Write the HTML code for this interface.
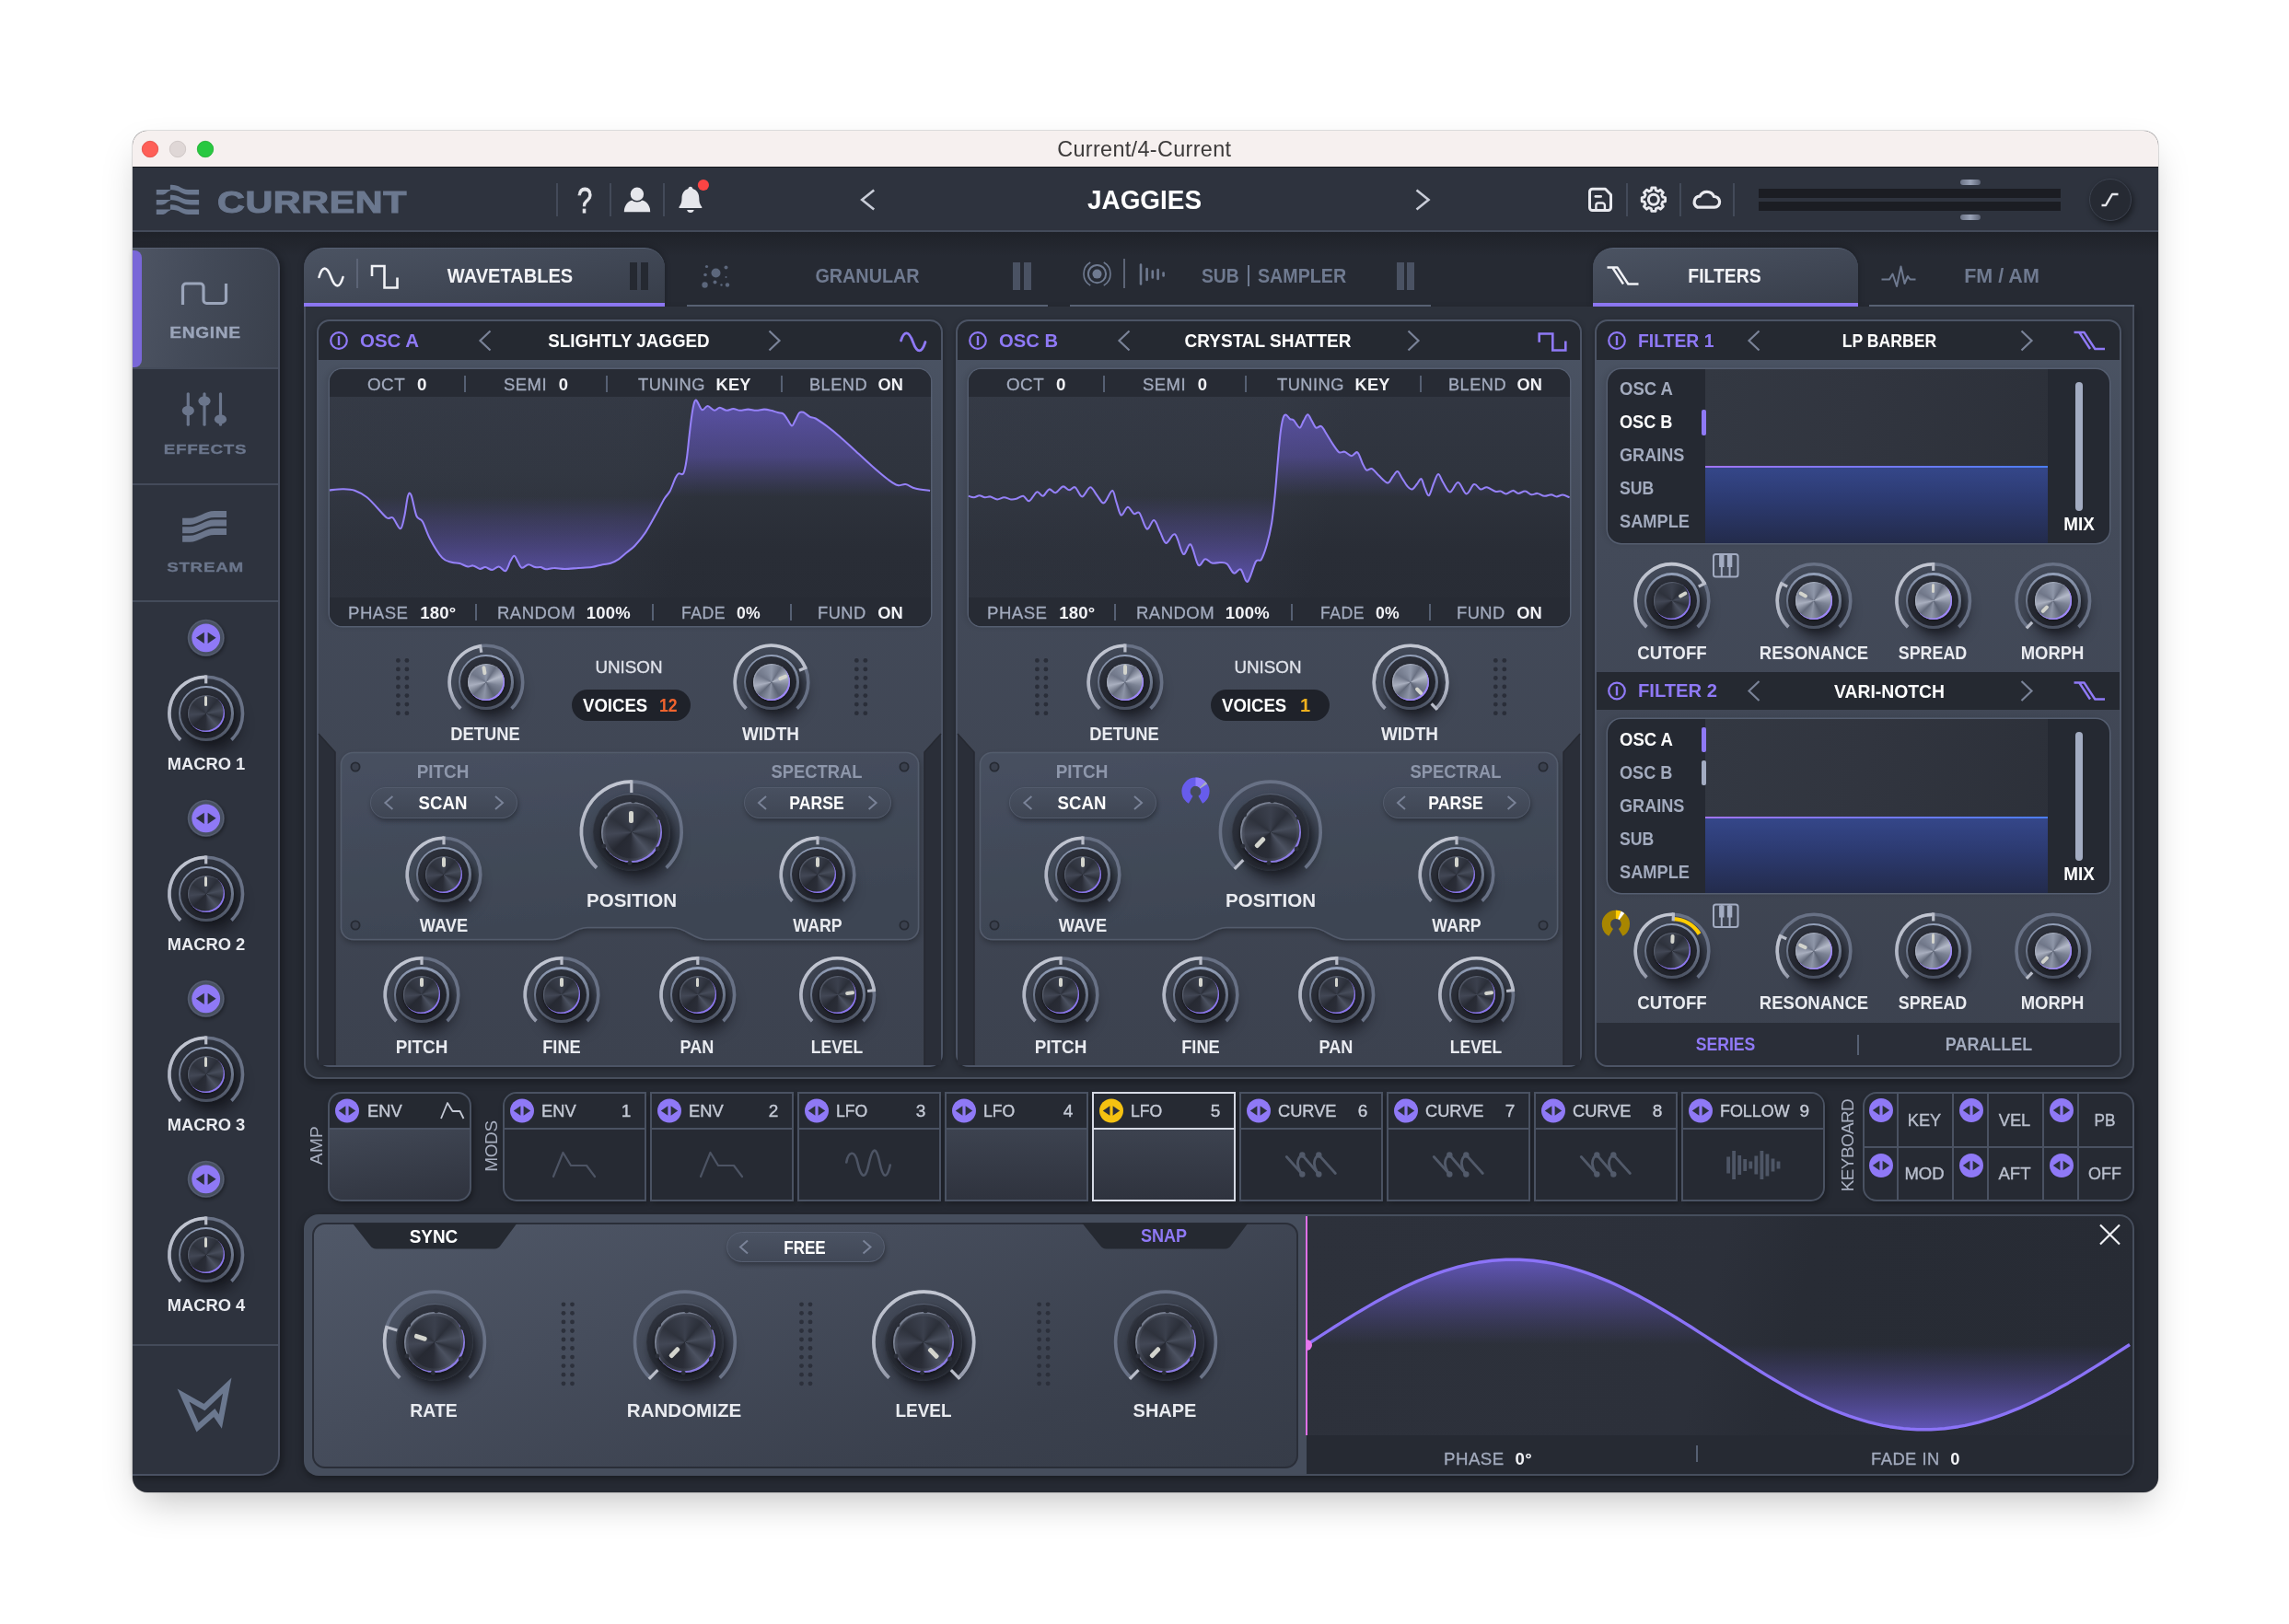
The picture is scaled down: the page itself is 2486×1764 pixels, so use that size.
<!DOCTYPE html>
<html><head><meta charset="utf-8"><title>Current/4-Current</title>
<style>
html,body{margin:0;padding:0;background:#fff;}
body{width:2486px;height:1764px;overflow:hidden;}
#root{will-change:transform;position:relative;width:2486px;height:1764px;overflow:hidden;font-family:"Liberation Sans",sans-serif;}
#root div{position:absolute;box-sizing:border-box;}
#ov{position:absolute;left:0;top:0;pointer-events:none;}
#top{left:0;top:0;width:0;height:0;}
.t{white-space:nowrap;line-height:1;}
.t b{font-weight:700;}
.kr{border-radius:50%;}
.kw{border-radius:50%;background:linear-gradient(150deg,#30343f 0%,#262932 45%,#1c1e25 100%);}
.kc{border-radius:50%;}
.kc i{position:absolute;left:50%;top:0;width:0;height:100%;display:block;}
.kc u{position:absolute;display:block;background:#d3d4cd;border-radius:2px;text-decoration:none;}
.kd{background:
  conic-gradient(from 0deg,#3b404d 0deg,#2b2f39 40deg,#474d5b 78deg,#2d313b 108deg,#4c5261 140deg,#2a2d37 185deg,#262932 225deg,#424755 265deg,#2e323c 305deg,#3b404d 360deg);
  box-shadow:inset -1.3px -1.5px 0.5px rgba(143,121,246,.95),inset 1px 1px 1px rgba(120,128,146,.5),0 1px 3px rgba(0,0,0,.6);}
.ks{background:
  conic-gradient(from 0deg,#8f97a9 0deg,#697082 32deg,#b3b9c8 68deg,#7b8294 105deg,#5c6374 150deg,#8d94a6 188deg,#646b7c 225deg,#a9afbf 258deg,#6f7688 300deg,#8f97a9 360deg);
  box-shadow:inset -1.4px -1.6px 0.5px rgba(160,135,255,.95),inset 1px 1px 1px rgba(190,196,210,.5),0 1px 3px rgba(0,0,0,.6);}
.kb{box-shadow:inset -1.6px -1.8px 0.6px rgba(143,121,246,.95),inset 1.6px 1.6px 1px rgba(150,158,176,.7),0 2px 4px rgba(0,0,0,.6);}
.kwb{background:linear-gradient(170deg,#30343f 0%,#292d37 45%,#22252d 100%);}
.kb::after{content:"";position:absolute;inset:0;border-radius:50%;background:radial-gradient(circle at 50% 50%,rgba(0,0,0,0) 0,rgba(0,0,0,0) 60%,rgba(140,148,168,.10) 62%,rgba(140,148,168,.16) 70%);}

</style></head>
<body>
<div id="root">
<div style="left:144.0px;top:142.0px;width:2200.0px;height:1478.5px;border-radius:16px;background:#262a33;box-shadow:0 0 0 0.5px rgba(0,0,0,.25),0 18px 42px -10px rgba(0,0,0,.25);overflow:hidden;"><div style="left:0;top:0;width:100%;height:39.5px;background:#f6f0ef;border-bottom:1px solid #15171c"></div><div style="left:0;top:39.5px;width:100%;height:70px;background:#2e333e;border-bottom:2px solid #434a59"></div><div style="left:0;top:109.5px;width:100%;height:26px;background:linear-gradient(180deg,#1f2229 0%,#262a33 100%)"></div></div>
<div class="t" style="left:1242.8px;top:151.00px;font-size:23.4px;color:#3c3a3a;font-weight:400;letter-spacing:0.35px;transform:translateX(-50%);">Current/4-Current</div>
<div class="t" style="left:235.6px;top:202.6px;font-size:33px;font-weight:700;color:#6b788f;letter-spacing:0.5px;-webkit-text-stroke:1.1px #6b788f;transform-origin:0 50%;transform:scaleX(1.25)">CURRENT</div>
<div style="left:604.0px;top:199.0px;width:2.0px;height:36.0px;background:#434a59"></div>
<div style="left:662.0px;top:199.0px;width:2.0px;height:36.0px;background:#434a59"></div>
<div style="left:720.0px;top:199.0px;width:2.0px;height:36.0px;background:#434a59"></div>
<div style="left:1766.0px;top:199.0px;width:2.0px;height:36.0px;background:#434a59"></div>
<div style="left:1824.0px;top:199.0px;width:2.0px;height:36.0px;background:#434a59"></div>
<div style="left:1882.0px;top:199.0px;width:2.0px;height:36.0px;background:#434a59"></div>
<div class="t" style="left:634.6px;top:198.00px;font-size:39px;color:#e6e7ec;font-weight:400;letter-spacing:0.00px;transform:translateX(-50%) scaleX(0.7608);-webkit-text-stroke:0.8px #e6e7ec;">?</div>
<div class="t" style="left:1243.0px;top:201.00px;font-size:30.4px;color:#ffffff;font-weight:700;letter-spacing:0.00px;transform:translateX(-50%) scaleX(0.9175);">JAGGIES</div>
<div style="left:1910.0px;top:205.0px;width:328.0px;height:10.0px;background:#1b1d23"></div>
<div style="left:1910.0px;top:219.0px;width:328.0px;height:10.0px;background:#1b1d23"></div>
<div style="left:2128.5px;top:195.0px;width:22.0px;height:6.0px;border-radius:3px;background:linear-gradient(90deg,#6b7386,#9aa3b7 50%,#5b6274)"></div>
<div style="left:2128.5px;top:233.0px;width:22.0px;height:6.0px;border-radius:3px;background:linear-gradient(90deg,#6b7386,#9aa3b7 50%,#5b6274)"></div>
<div style="left:2269.0px;top:193.6px;width:46.0px;height:46.0px;border-radius:50%;background:#262a33;border:1.5px solid #3d4350;box-shadow:2px 3px 6px rgba(0,0,0,.45)"></div>
<div style="left:144.0px;top:269.0px;width:160.0px;height:1334.0px;background:#2e333e;border-right:2px solid #4a5162;border-bottom:2px solid #4a5162;border-radius:0 22px 22px 0;box-shadow:3px 3px 8px rgba(0,0,0,.35)"></div>
<div style="left:144.0px;top:269.0px;width:158.0px;height:131.0px;border-radius:0 22px 0 0;background:linear-gradient(100deg,#4e5564 0%,#434a58 45%,#3a404c 100%);border-top:1px solid #586072"></div>
<div style="left:144.0px;top:271.5px;width:10.0px;height:127.0px;border-radius:0 8px 8px 0;background:#7967d8"></div>
<div style="left:144.0px;top:399.0px;width:158.0px;height:2.0px;background:#444b5a"></div>
<div style="left:144.0px;top:525.0px;width:158.0px;height:2.0px;background:#444b5a"></div>
<div style="left:144.0px;top:652.4px;width:158.0px;height:2.0px;background:#444b5a"></div>
<div style="left:144.0px;top:1459.5px;width:158.0px;height:2.0px;background:#444b5a"></div>
<div class="t" style="left:222.9px;top:354.00px;font-size:16px;font-weight:700;color:#9ba5ba;letter-spacing:0.55px;-webkit-text-stroke:0.3px #9ba5ba;transform:translateX(-50%) scaleX(1.2)">ENGINE</div>
<div class="t" style="left:222.9px;top:480.00px;font-size:15.2px;font-weight:700;color:#6b768c;letter-spacing:0.55px;-webkit-text-stroke:0.3px #6b768c;transform:translateX(-50%) scaleX(1.24)">EFFECTS</div>
<div class="t" style="left:222.6px;top:608.00px;font-size:15.2px;font-weight:700;color:#6b768c;letter-spacing:0.55px;-webkit-text-stroke:0.3px #6b768c;transform:translateX(-50%) scaleX(1.24)">STREAM</div>
<div class="kr" style="left:193.6px;top:744.9px;width:60.2px;height:60.2px;background:linear-gradient(180deg,#93a0b9 0%,#707a8e 45%,#495060 100%);box-shadow:7px 11px 14px rgba(12,13,18,.55),2px 3px 5px rgba(12,13,18,.35);"><div class="kw" style="inset:2.6px"></div></div>
<div class="kc kd" style="left:203.5px;top:754.8px;width:40.4px;height:40.4px"><i style="transform:rotate(0deg)"><u style="width:3.4px;height:10.5px;margin-left:-1.7px;top:1.6px"></u></i></div>
<div class="t" style="left:223.7px;top:820.00px;font-size:19px;color:#e9ebf0;font-weight:700;letter-spacing:0.00px;transform:translateX(-50%) scaleX(0.9645);">MACRO 1</div>
<div class="kr" style="left:193.6px;top:940.9px;width:60.2px;height:60.2px;background:linear-gradient(180deg,#93a0b9 0%,#707a8e 45%,#495060 100%);box-shadow:7px 11px 14px rgba(12,13,18,.55),2px 3px 5px rgba(12,13,18,.35);"><div class="kw" style="inset:2.6px"></div></div>
<div class="kc kd" style="left:203.5px;top:950.8px;width:40.4px;height:40.4px"><i style="transform:rotate(0deg)"><u style="width:3.4px;height:10.5px;margin-left:-1.7px;top:1.6px"></u></i></div>
<div class="t" style="left:223.7px;top:1016.00px;font-size:19px;color:#e9ebf0;font-weight:700;letter-spacing:0.00px;transform:translateX(-50%) scaleX(0.9645);">MACRO 2</div>
<div class="kr" style="left:193.6px;top:1136.9px;width:60.2px;height:60.2px;background:linear-gradient(180deg,#93a0b9 0%,#707a8e 45%,#495060 100%);box-shadow:7px 11px 14px rgba(12,13,18,.55),2px 3px 5px rgba(12,13,18,.35);"><div class="kw" style="inset:2.6px"></div></div>
<div class="kc kd" style="left:203.5px;top:1146.8px;width:40.4px;height:40.4px"><i style="transform:rotate(0deg)"><u style="width:3.4px;height:10.5px;margin-left:-1.7px;top:1.6px"></u></i></div>
<div class="t" style="left:223.7px;top:1212.00px;font-size:19px;color:#e9ebf0;font-weight:700;letter-spacing:0.00px;transform:translateX(-50%) scaleX(0.9645);">MACRO 3</div>
<div class="kr" style="left:193.6px;top:1332.9px;width:60.2px;height:60.2px;background:linear-gradient(180deg,#93a0b9 0%,#707a8e 45%,#495060 100%);box-shadow:7px 11px 14px rgba(12,13,18,.55),2px 3px 5px rgba(12,13,18,.35);"><div class="kw" style="inset:2.6px"></div></div>
<div class="kc kd" style="left:203.5px;top:1342.8px;width:40.4px;height:40.4px"><i style="transform:rotate(0deg)"><u style="width:3.4px;height:10.5px;margin-left:-1.7px;top:1.6px"></u></i></div>
<div class="t" style="left:223.7px;top:1408.00px;font-size:19px;color:#e9ebf0;font-weight:700;letter-spacing:0.00px;transform:translateX(-50%) scaleX(0.9645);">MACRO 4</div>
<div style="left:330.0px;top:269.0px;width:392.0px;height:64.0px;background:linear-gradient(170deg,#4b5362 0%,#414856 50%,#373d49 100%);border-radius:22px 22px 0 0;border-top:1px solid #566073;box-shadow:0 -1px 6px rgba(0,0,0,.25)"></div>
<div style="left:330.0px;top:329.0px;width:392.0px;height:4.0px;background:#8f79f6"></div>
<div style="left:1730.0px;top:269.0px;width:288.0px;height:64.0px;background:linear-gradient(170deg,#4b5362 0%,#414856 50%,#373d49 100%);border-radius:22px 22px 0 0;border-top:1px solid #566073;box-shadow:0 -1px 6px rgba(0,0,0,.25)"></div>
<div style="left:1730.0px;top:329.0px;width:288.0px;height:4.0px;background:#8f79f6"></div>
<div style="left:746.0px;top:330.6px;width:392.0px;height:2.3px;background:#5b6578"></div>
<div style="left:1162.0px;top:330.6px;width:392.0px;height:2.3px;background:#5b6578"></div>
<div style="left:2030.0px;top:330.6px;width:288.0px;height:2.3px;background:#5b6578"></div>
<div style="left:386.5px;top:281.0px;width:2.0px;height:32.0px;background:#5c6476"></div>
<div class="t" style="left:553.5px;top:289.00px;font-size:22px;color:#f1f2f6;font-weight:700;letter-spacing:0.00px;transform:translateX(-50%) scaleX(0.9116);">WAVETABLES</div>
<div style="left:684.0px;top:285.0px;width:8.0px;height:30.0px;background:#252931"></div>
<div style="left:696.0px;top:285.0px;width:8.0px;height:30.0px;background:#252931"></div>
<div class="t" style="left:941.6px;top:289.00px;font-size:22px;color:#6f7a90;font-weight:700;letter-spacing:0.00px;transform:translateX(-50%) scaleX(0.8993);">GRANULAR</div>
<div style="left:1100.4px;top:285.0px;width:8.0px;height:30.0px;background:#4a5263"></div>
<div style="left:1112.0px;top:285.0px;width:8.0px;height:30.0px;background:#4a5263"></div>
<div style="left:1220.0px;top:281.0px;width:2.0px;height:32.0px;background:#5c6476"></div>
<div class="t" style="left:1305.2px;top:289.00px;font-size:22px;color:#6f7a90;font-weight:700;letter-spacing:0.00px;transform-origin:0 50%;transform:scaleX(0.8762);">SUB</div>
<div style="left:1354.9px;top:287.6px;width:2.2px;height:23.6px;background:#6f7a90"></div>
<div class="t" style="left:1366.2px;top:289.00px;font-size:22px;color:#6f7a90;font-weight:700;letter-spacing:0.00px;transform-origin:0 50%;transform:scaleX(0.8934);">SAMPLER</div>
<div style="left:1516.5px;top:285.0px;width:8.0px;height:30.0px;background:#4a5263"></div>
<div style="left:1528.0px;top:285.0px;width:8.0px;height:30.0px;background:#4a5263"></div>
<div class="t" style="left:1873.4px;top:289.00px;font-size:22px;color:#f1f2f6;font-weight:700;letter-spacing:0.00px;transform:translateX(-50%) scaleX(0.8808);">FILTERS</div>
<div class="t" style="left:2173.8px;top:289.00px;font-size:22px;color:#6f7a90;font-weight:700;letter-spacing:0.00px;transform:translateX(-50%) scaleX(0.9773);">FM / AM</div>
<div style="left:330.0px;top:333.0px;width:1988.0px;height:839.0px;background:#2d323c;border:2px solid #474e5c;border-top:none;border-radius:0 0 16px 16px;box-shadow:0 4px 8px rgba(0,0,0,.3)"></div>
<div style="left:344.0px;top:347.0px;width:680.0px;height:812.0px;border-radius:14px;border:2px solid #4c5465;background:linear-gradient(180deg,#4b5464 0%,#434a59 30%,#3c424f 100%);overflow:hidden;box-shadow:0 2px 6px rgba(0,0,0,.3)"><div style="left:0;top:0;width:100%;height:42px;background:#252931"></div></div>
<div class="t" style="left:390.7px;top:359.00px;font-size:21px;color:#8f79f6;font-weight:700;letter-spacing:0.00px;transform-origin:0 50%;transform:scaleX(0.9737);">OSC A</div>
<div class="t" style="left:683.3px;top:361.00px;font-size:19.8px;color:#ffffff;font-weight:700;letter-spacing:0.00px;transform:translateX(-50%) scaleX(0.9495);">SLIGHTLY JAGGED</div>
<div style="left:357.5px;top:401.0px;width:653.0px;height:278.5px;border-radius:14px;background:linear-gradient(180deg,#323742 0%,#2f343e 40%,#292d36 70%,#282c35 100%);overflow:hidden;box-shadow:0 0 0 1.5px #555e70,-3px 0 6px rgba(0,0,0,.12)"><div style="left:0;top:0;width:100%;height:100%;background:linear-gradient(103deg,rgba(70,77,92,.16) 0%,rgba(70,77,92,.12) 48%,rgba(30,33,40,0) 60%)"></div><div style="left:0;top:0;width:100%;height:29.5px;background:#272b34"></div><div style="left:0;bottom:0;width:100%;height:31px;background:#272b34"></div></div>
<div class="t" style="left:398.5px;top:408.00px;font-size:19px;color:#a3abbe;font-weight:400;letter-spacing:0.5px;-webkit-text-stroke:0.3px #a3abbe;transform-origin:0 50%;transform:scaleX(0.9897)">OCT<b style="color:#f1f2f6;margin-left:13px;letter-spacing:0.2px;-webkit-text-stroke:0">0</b></div>
<div class="t" style="left:547.0px;top:408.00px;font-size:19px;color:#a3abbe;font-weight:400;letter-spacing:0.5px;-webkit-text-stroke:0.3px #a3abbe;transform-origin:0 50%;transform:scaleX(0.9720)">SEMI<b style="color:#f1f2f6;margin-left:13px;letter-spacing:0.2px;-webkit-text-stroke:0">0</b></div>
<div class="t" style="left:692.5px;top:408.00px;font-size:19px;color:#a3abbe;font-weight:400;letter-spacing:0.5px;-webkit-text-stroke:0.3px #a3abbe;transform-origin:0 50%;transform:scaleX(0.9623)">TUNING<b style="color:#f1f2f6;margin-left:12px;letter-spacing:0.2px;-webkit-text-stroke:0">KEY</b></div>
<div class="t" style="left:878.7px;top:408.00px;font-size:19px;color:#a3abbe;font-weight:400;letter-spacing:0.5px;-webkit-text-stroke:0.3px #a3abbe;transform-origin:0 50%;transform:scaleX(0.9563)">BLEND<b style="color:#f1f2f6;margin-left:12px;letter-spacing:0.2px;-webkit-text-stroke:0">ON</b></div>
<div style="left:504.0px;top:407.5px;width:2.0px;height:18.0px;background:#566073"></div>
<div style="left:658.0px;top:407.5px;width:2.0px;height:18.0px;background:#566073"></div>
<div style="left:848.0px;top:407.5px;width:2.0px;height:18.0px;background:#566073"></div>
<div class="t" style="left:377.8px;top:656.00px;font-size:19px;color:#a3abbe;font-weight:400;letter-spacing:0.5px;-webkit-text-stroke:0.3px #a3abbe;transform-origin:0 50%;transform:scaleX(0.9782)">PHASE<b style="color:#f1f2f6;margin-left:13px;letter-spacing:0.2px;-webkit-text-stroke:0">180°</b></div>
<div class="t" style="left:539.7px;top:656.00px;font-size:19px;color:#a3abbe;font-weight:400;letter-spacing:0.5px;-webkit-text-stroke:0.3px #a3abbe;transform-origin:0 50%;transform:scaleX(0.9728)">RANDOM<b style="color:#f1f2f6;margin-left:12px;letter-spacing:0.2px;-webkit-text-stroke:0">100%</b></div>
<div class="t" style="left:740.0px;top:656.00px;font-size:19px;color:#a3abbe;font-weight:400;letter-spacing:0.5px;-webkit-text-stroke:0.3px #a3abbe;transform-origin:0 50%;transform:scaleX(0.9275)">FADE<b style="color:#f1f2f6;margin-left:13px;letter-spacing:0.2px;-webkit-text-stroke:0">0%</b></div>
<div class="t" style="left:888.0px;top:656.00px;font-size:19px;color:#a3abbe;font-weight:400;letter-spacing:0.5px;-webkit-text-stroke:0.3px #a3abbe;transform-origin:0 50%;transform:scaleX(0.9620)">FUND<b style="color:#f1f2f6;margin-left:13px;letter-spacing:0.2px;-webkit-text-stroke:0">ON</b></div>
<div style="left:515.8px;top:655.5px;width:2.0px;height:18.0px;background:#566073"></div>
<div style="left:708.0px;top:655.5px;width:2.0px;height:18.0px;background:#566073"></div>
<div style="left:858.3px;top:655.5px;width:2.0px;height:18.0px;background:#566073"></div>
<div class="kr" style="left:497.8px;top:710.9px;width:60.2px;height:60.2px;background:linear-gradient(180deg,#93a0b9 0%,#707a8e 45%,#495060 100%);box-shadow:7px 11px 14px rgba(12,13,18,.55),2px 3px 5px rgba(12,13,18,.35);"><div class="kw" style="inset:2.6px"></div></div>
<div class="kc ks" style="left:507.7px;top:720.8px;width:40.4px;height:40.4px"><i style="transform:rotate(-9deg)"><u style="width:3.4px;height:10.5px;margin-left:-1.7px;top:1.6px"></u></i></div>
<div class="kr" style="left:807.9px;top:710.9px;width:60.2px;height:60.2px;background:linear-gradient(180deg,#93a0b9 0%,#707a8e 45%,#495060 100%);box-shadow:7px 11px 14px rgba(12,13,18,.55),2px 3px 5px rgba(12,13,18,.35);"><div class="kw" style="inset:2.6px"></div></div>
<div class="kc ks" style="left:817.8px;top:720.8px;width:40.4px;height:40.4px"><i style="transform:rotate(67deg)"><u style="width:3.4px;height:10.5px;margin-left:-1.7px;top:1.6px"></u></i></div>
<div class="t" style="left:527.3px;top:787.00px;font-size:20px;color:#e9ebf0;font-weight:700;letter-spacing:0.00px;transform:translateX(-50%) scaleX(0.9170);">DETUNE</div>
<div class="t" style="left:837.4px;top:787.00px;font-size:20px;color:#e9ebf0;font-weight:700;letter-spacing:0.00px;transform:translateX(-50%) scaleX(0.9475);">WIDTH</div>
<div class="t" style="left:683.2px;top:715.00px;font-size:19px;color:#dfe2ea;font-weight:400;letter-spacing:0.00px;transform:translateX(-50%) scaleX(0.9906);-webkit-text-stroke:0.35px #dfe2ea;">UNISON</div>
<div style="left:620.5px;top:749.3px;width:129.5px;height:33.5px;border-radius:17px;background:#1f222a"></div>
<div class="t" style="left:633.0px;top:756.00px;font-size:20px;color:#ffffff;font-weight:700;letter-spacing:0.00px;transform-origin:0 50%;transform:scaleX(0.9288);">VOICES</div>
<div class="t" style="left:715.9px;top:756.00px;font-size:20px;color:#f0632e;font-weight:700;letter-spacing:0.00px;transform-origin:0 50%;transform:scaleX(0.8811);">12</div>
<svg style="position:absolute;left:0;top:0" width="2486" height="1764" viewBox="0 0 2486 1764"><path d="M383.5,817.5 H984.5 A13,13 0 0 1 997.5,830.5 V1007.5 A13,13 0 0 1 984.5,1020.5 H768 C752,1020.5 746,1007.5 730,1007.5 H638 C622,1007.5 616,1020.5 600,1020.5 H383.5 A13,13 0 0 1 370.5,1007.5 V830.5 A13,13 0 0 1 383.5,817.5 Z" fill="url(#modp)" stroke="#535b6c" stroke-width="1.600" filter="url(#sh3)"/><circle cx="386" cy="833" r="4.600" fill="#3a404d" stroke="#262a33" stroke-width="1.800"/><circle cx="386" cy="1005" r="4.600" fill="#3a404d" stroke="#262a33" stroke-width="1.800"/><circle cx="982" cy="833" r="4.600" fill="#3a404d" stroke="#262a33" stroke-width="1.800"/><circle cx="982" cy="1005" r="4.600" fill="#3a404d" stroke="#262a33" stroke-width="1.800"/></svg>
<div class="t" style="left:481.4px;top:829.00px;font-size:19.5px;color:#8e97ab;font-weight:700;letter-spacing:0.00px;transform:translateX(-50%) scaleX(0.9692);">PITCH</div>
<div class="t" style="left:887.4px;top:829.00px;font-size:19.5px;color:#8e97ab;font-weight:700;letter-spacing:0.00px;transform:translateX(-50%) scaleX(0.9411);">SPECTRAL</div>
<div style="left:402.4px;top:855.4px;width:159.6px;height:33.2px;border-radius:17px;background:linear-gradient(180deg,#485060,#3f4654);border:1px solid #535b6c;box-shadow:1px 3px 5px rgba(0,0,0,.3)"></div>
<div class="t" style="left:481.4px;top:862.00px;font-size:20px;color:#ffffff;font-weight:700;letter-spacing:0.00px;transform:translateX(-50%) scaleX(0.9317);">SCAN</div>
<div style="left:808.0px;top:855.4px;width:159.6px;height:33.2px;border-radius:17px;background:linear-gradient(180deg,#485060,#3f4654);border:1px solid #535b6c;box-shadow:1px 3px 5px rgba(0,0,0,.3)"></div>
<div class="t" style="left:887.0px;top:862.00px;font-size:20px;color:#ffffff;font-weight:700;letter-spacing:0.00px;transform:translateX(-50%) scaleX(0.8810);">PARSE</div>
<div class="kr" style="left:451.9px;top:919.9px;width:60.2px;height:60.2px;background:linear-gradient(180deg,#93a0b9 0%,#707a8e 45%,#495060 100%);box-shadow:7px 11px 14px rgba(12,13,18,.55),2px 3px 5px rgba(12,13,18,.35);"><div class="kw" style="inset:2.6px"></div></div>
<div class="kc kd" style="left:461.8px;top:929.8px;width:40.4px;height:40.4px"><i style="transform:rotate(0deg)"><u style="width:3.4px;height:10.5px;margin-left:-1.7px;top:1.6px"></u></i></div>
<div class="kr" style="left:857.9px;top:919.9px;width:60.2px;height:60.2px;background:linear-gradient(180deg,#93a0b9 0%,#707a8e 45%,#495060 100%);box-shadow:7px 11px 14px rgba(12,13,18,.55),2px 3px 5px rgba(12,13,18,.35);"><div class="kw" style="inset:2.6px"></div></div>
<div class="kc kd" style="left:867.8px;top:929.8px;width:40.4px;height:40.4px"><i style="transform:rotate(0deg)"><u style="width:3.4px;height:10.5px;margin-left:-1.7px;top:1.6px"></u></i></div>
<div class="kr" style="left:643.8px;top:861.5px;width:84.0px;height:84.0px;background:linear-gradient(180deg,#596173 0%,#333843 18%,#272b34 100%);box-shadow:7px 11px 14px rgba(12,13,18,.55),2px 3px 5px rgba(12,13,18,.35);"><div class="kw kwb" style="inset:1.5px"></div></div>
<div class="kc kd kb" style="left:652.8px;top:870.5px;width:66.0px;height:66.0px"><i style="transform:rotate(0deg)"><u style="width:5px;height:13.5px;margin-left:-2.5px;top:10.3px"></u></i></div>
<div class="t" style="left:685.6px;top:967.00px;font-size:21px;color:#e9ebf0;font-weight:700;letter-spacing:0.00px;transform:translateX(-50%) scaleX(0.9766);">POSITION</div>
<div class="t" style="left:481.7px;top:995.00px;font-size:20px;color:#e9ebf0;font-weight:700;letter-spacing:0.00px;transform:translateX(-50%) scaleX(0.9126);">WAVE</div>
<div class="t" style="left:887.6px;top:995.00px;font-size:20px;color:#e9ebf0;font-weight:700;letter-spacing:0.00px;transform:translateX(-50%) scaleX(0.8883);">WARP</div>
<div class="kr" style="left:427.9px;top:1050.4px;width:60.2px;height:60.2px;background:linear-gradient(180deg,#93a0b9 0%,#707a8e 45%,#495060 100%);box-shadow:7px 11px 14px rgba(12,13,18,.55),2px 3px 5px rgba(12,13,18,.35);"><div class="kw" style="inset:2.6px"></div></div>
<div class="kc kd" style="left:437.8px;top:1060.3px;width:40.4px;height:40.4px"><i style="transform:rotate(0deg)"><u style="width:3.4px;height:10.5px;margin-left:-1.7px;top:1.6px"></u></i></div>
<div class="t" style="left:457.6px;top:1127.00px;font-size:20px;color:#e9ebf0;font-weight:700;letter-spacing:0.00px;transform:translateX(-50%) scaleX(0.9450);">PITCH</div>
<div class="kr" style="left:579.9px;top:1050.4px;width:60.2px;height:60.2px;background:linear-gradient(180deg,#93a0b9 0%,#707a8e 45%,#495060 100%);box-shadow:7px 11px 14px rgba(12,13,18,.55),2px 3px 5px rgba(12,13,18,.35);"><div class="kw" style="inset:2.6px"></div></div>
<div class="kc kd" style="left:589.8px;top:1060.3px;width:40.4px;height:40.4px"><i style="transform:rotate(0deg)"><u style="width:3.4px;height:10.5px;margin-left:-1.7px;top:1.6px"></u></i></div>
<div class="t" style="left:609.6px;top:1127.00px;font-size:20px;color:#e9ebf0;font-weight:700;letter-spacing:0.00px;transform:translateX(-50%) scaleX(0.9132);">FINE</div>
<div class="kr" style="left:727.7px;top:1050.4px;width:60.2px;height:60.2px;background:linear-gradient(180deg,#93a0b9 0%,#707a8e 45%,#495060 100%);box-shadow:7px 11px 14px rgba(12,13,18,.55),2px 3px 5px rgba(12,13,18,.35);"><div class="kw" style="inset:2.6px"></div></div>
<div class="kc kd" style="left:737.6px;top:1060.3px;width:40.4px;height:40.4px"><i style="transform:rotate(0deg)"><u style="width:3.4px;height:10.5px;margin-left:-1.7px;top:1.6px"></u></i></div>
<div class="t" style="left:757.4px;top:1127.00px;font-size:20px;color:#e9ebf0;font-weight:700;letter-spacing:0.00px;transform:translateX(-50%) scaleX(0.9032);">PAN</div>
<div class="kr" style="left:879.6px;top:1050.4px;width:60.2px;height:60.2px;background:linear-gradient(180deg,#93a0b9 0%,#707a8e 45%,#495060 100%);box-shadow:7px 11px 14px rgba(12,13,18,.55),2px 3px 5px rgba(12,13,18,.35);"><div class="kw" style="inset:2.6px"></div></div>
<div class="kc kd" style="left:889.5px;top:1060.3px;width:40.4px;height:40.4px"><i style="transform:rotate(83deg)"><u style="width:3.4px;height:10.5px;margin-left:-1.7px;top:1.6px"></u></i></div>
<div class="t" style="left:909.3px;top:1127.00px;font-size:20px;color:#e9ebf0;font-weight:700;letter-spacing:0.00px;transform:translateX(-50%) scaleX(0.8751);">LEVEL</div>
<div style="left:1038.0px;top:347.0px;width:680.0px;height:812.0px;border-radius:14px;border:2px solid #4c5465;background:linear-gradient(180deg,#4b5464 0%,#434a59 30%,#3c424f 100%);overflow:hidden;box-shadow:0 2px 6px rgba(0,0,0,.3)"><div style="left:0;top:0;width:100%;height:42px;background:#252931"></div></div>
<div class="t" style="left:1084.7px;top:359.00px;font-size:21px;color:#8f79f6;font-weight:700;letter-spacing:0.00px;transform-origin:0 50%;transform:scaleX(0.9623);">OSC B</div>
<div class="t" style="left:1377.3px;top:361.00px;font-size:19.8px;color:#ffffff;font-weight:700;letter-spacing:0.00px;transform:translateX(-50%) scaleX(0.9604);">CRYSTAL SHATTER</div>
<div style="left:1051.5px;top:401.0px;width:653.0px;height:278.5px;border-radius:14px;background:linear-gradient(180deg,#323742 0%,#2f343e 40%,#292d36 70%,#282c35 100%);overflow:hidden;box-shadow:0 0 0 1.5px #555e70,-3px 0 6px rgba(0,0,0,.12)"><div style="left:0;top:0;width:100%;height:100%;background:linear-gradient(103deg,rgba(70,77,92,.16) 0%,rgba(70,77,92,.12) 48%,rgba(30,33,40,0) 60%)"></div><div style="left:0;top:0;width:100%;height:29.5px;background:#272b34"></div><div style="left:0;bottom:0;width:100%;height:31px;background:#272b34"></div></div>
<div class="t" style="left:1092.5px;top:408.00px;font-size:19px;color:#a3abbe;font-weight:400;letter-spacing:0.5px;-webkit-text-stroke:0.3px #a3abbe;transform-origin:0 50%;transform:scaleX(0.9897)">OCT<b style="color:#f1f2f6;margin-left:13px;letter-spacing:0.2px;-webkit-text-stroke:0">0</b></div>
<div class="t" style="left:1241.0px;top:408.00px;font-size:19px;color:#a3abbe;font-weight:400;letter-spacing:0.5px;-webkit-text-stroke:0.3px #a3abbe;transform-origin:0 50%;transform:scaleX(0.9720)">SEMI<b style="color:#f1f2f6;margin-left:13px;letter-spacing:0.2px;-webkit-text-stroke:0">0</b></div>
<div class="t" style="left:1386.5px;top:408.00px;font-size:19px;color:#a3abbe;font-weight:400;letter-spacing:0.5px;-webkit-text-stroke:0.3px #a3abbe;transform-origin:0 50%;transform:scaleX(0.9623)">TUNING<b style="color:#f1f2f6;margin-left:12px;letter-spacing:0.2px;-webkit-text-stroke:0">KEY</b></div>
<div class="t" style="left:1572.7px;top:408.00px;font-size:19px;color:#a3abbe;font-weight:400;letter-spacing:0.5px;-webkit-text-stroke:0.3px #a3abbe;transform-origin:0 50%;transform:scaleX(0.9563)">BLEND<b style="color:#f1f2f6;margin-left:12px;letter-spacing:0.2px;-webkit-text-stroke:0">ON</b></div>
<div style="left:1198.0px;top:407.5px;width:2.0px;height:18.0px;background:#566073"></div>
<div style="left:1352.0px;top:407.5px;width:2.0px;height:18.0px;background:#566073"></div>
<div style="left:1542.0px;top:407.5px;width:2.0px;height:18.0px;background:#566073"></div>
<div class="t" style="left:1071.8px;top:656.00px;font-size:19px;color:#a3abbe;font-weight:400;letter-spacing:0.5px;-webkit-text-stroke:0.3px #a3abbe;transform-origin:0 50%;transform:scaleX(0.9782)">PHASE<b style="color:#f1f2f6;margin-left:13px;letter-spacing:0.2px;-webkit-text-stroke:0">180°</b></div>
<div class="t" style="left:1233.7px;top:656.00px;font-size:19px;color:#a3abbe;font-weight:400;letter-spacing:0.5px;-webkit-text-stroke:0.3px #a3abbe;transform-origin:0 50%;transform:scaleX(0.9728)">RANDOM<b style="color:#f1f2f6;margin-left:12px;letter-spacing:0.2px;-webkit-text-stroke:0">100%</b></div>
<div class="t" style="left:1434.0px;top:656.00px;font-size:19px;color:#a3abbe;font-weight:400;letter-spacing:0.5px;-webkit-text-stroke:0.3px #a3abbe;transform-origin:0 50%;transform:scaleX(0.9275)">FADE<b style="color:#f1f2f6;margin-left:13px;letter-spacing:0.2px;-webkit-text-stroke:0">0%</b></div>
<div class="t" style="left:1582.0px;top:656.00px;font-size:19px;color:#a3abbe;font-weight:400;letter-spacing:0.5px;-webkit-text-stroke:0.3px #a3abbe;transform-origin:0 50%;transform:scaleX(0.9620)">FUND<b style="color:#f1f2f6;margin-left:13px;letter-spacing:0.2px;-webkit-text-stroke:0">ON</b></div>
<div style="left:1209.8px;top:655.5px;width:2.0px;height:18.0px;background:#566073"></div>
<div style="left:1402.0px;top:655.5px;width:2.0px;height:18.0px;background:#566073"></div>
<div style="left:1552.3px;top:655.5px;width:2.0px;height:18.0px;background:#566073"></div>
<div class="kr" style="left:1191.8px;top:710.9px;width:60.2px;height:60.2px;background:linear-gradient(180deg,#93a0b9 0%,#707a8e 45%,#495060 100%);box-shadow:7px 11px 14px rgba(12,13,18,.55),2px 3px 5px rgba(12,13,18,.35);"><div class="kw" style="inset:2.6px"></div></div>
<div class="kc ks" style="left:1201.7px;top:720.8px;width:40.4px;height:40.4px"><i style="transform:rotate(0deg)"><u style="width:3.4px;height:10.5px;margin-left:-1.7px;top:1.6px"></u></i></div>
<div class="kr" style="left:1501.9px;top:710.9px;width:60.2px;height:60.2px;background:linear-gradient(180deg,#93a0b9 0%,#707a8e 45%,#495060 100%);box-shadow:7px 11px 14px rgba(12,13,18,.55),2px 3px 5px rgba(12,13,18,.35);"><div class="kw" style="inset:2.6px"></div></div>
<div class="kc ks" style="left:1511.8px;top:720.8px;width:40.4px;height:40.4px"><i style="transform:rotate(136deg)"><u style="width:3.4px;height:10.5px;margin-left:-1.7px;top:1.6px"></u></i></div>
<div class="t" style="left:1221.3px;top:787.00px;font-size:20px;color:#e9ebf0;font-weight:700;letter-spacing:0.00px;transform:translateX(-50%) scaleX(0.9170);">DETUNE</div>
<div class="t" style="left:1531.4px;top:787.00px;font-size:20px;color:#e9ebf0;font-weight:700;letter-spacing:0.00px;transform:translateX(-50%) scaleX(0.9475);">WIDTH</div>
<div class="t" style="left:1377.2px;top:715.00px;font-size:19px;color:#dfe2ea;font-weight:400;letter-spacing:0.00px;transform:translateX(-50%) scaleX(0.9906);-webkit-text-stroke:0.35px #dfe2ea;">UNISON</div>
<div style="left:1314.5px;top:749.3px;width:129.5px;height:33.5px;border-radius:17px;background:#1f222a"></div>
<div class="t" style="left:1327.0px;top:756.00px;font-size:20px;color:#ffffff;font-weight:700;letter-spacing:0.00px;transform-origin:0 50%;transform:scaleX(0.9288);">VOICES</div>
<div class="t" style="left:1412.0px;top:756.00px;font-size:20px;color:#f0b11e;font-weight:700;letter-spacing:0.00px;">1</div>
<svg style="position:absolute;left:0;top:0" width="2486" height="1764" viewBox="0 0 2486 1764"><path d="M1077.5,817.5 H1678.5 A13,13 0 0 1 1691.5,830.5 V1007.5 A13,13 0 0 1 1678.5,1020.5 H1462 C1446,1020.5 1440,1007.5 1424,1007.5 H1332 C1316,1007.5 1310,1020.5 1294,1020.5 H1077.5 A13,13 0 0 1 1064.5,1007.5 V830.5 A13,13 0 0 1 1077.5,817.5 Z" fill="url(#modp)" stroke="#535b6c" stroke-width="1.600" filter="url(#sh3)"/><circle cx="1080" cy="833" r="4.600" fill="#3a404d" stroke="#262a33" stroke-width="1.800"/><circle cx="1080" cy="1005" r="4.600" fill="#3a404d" stroke="#262a33" stroke-width="1.800"/><circle cx="1676" cy="833" r="4.600" fill="#3a404d" stroke="#262a33" stroke-width="1.800"/><circle cx="1676" cy="1005" r="4.600" fill="#3a404d" stroke="#262a33" stroke-width="1.800"/></svg>
<div class="t" style="left:1175.4px;top:829.00px;font-size:19.5px;color:#8e97ab;font-weight:700;letter-spacing:0.00px;transform:translateX(-50%) scaleX(0.9692);">PITCH</div>
<div class="t" style="left:1581.4px;top:829.00px;font-size:19.5px;color:#8e97ab;font-weight:700;letter-spacing:0.00px;transform:translateX(-50%) scaleX(0.9411);">SPECTRAL</div>
<div style="left:1096.4px;top:855.4px;width:159.6px;height:33.2px;border-radius:17px;background:linear-gradient(180deg,#485060,#3f4654);border:1px solid #535b6c;box-shadow:1px 3px 5px rgba(0,0,0,.3)"></div>
<div class="t" style="left:1175.4px;top:862.00px;font-size:20px;color:#ffffff;font-weight:700;letter-spacing:0.00px;transform:translateX(-50%) scaleX(0.9317);">SCAN</div>
<div style="left:1502.0px;top:855.4px;width:159.6px;height:33.2px;border-radius:17px;background:linear-gradient(180deg,#485060,#3f4654);border:1px solid #535b6c;box-shadow:1px 3px 5px rgba(0,0,0,.3)"></div>
<div class="t" style="left:1581.0px;top:862.00px;font-size:20px;color:#ffffff;font-weight:700;letter-spacing:0.00px;transform:translateX(-50%) scaleX(0.8810);">PARSE</div>
<div class="kr" style="left:1145.9px;top:919.9px;width:60.2px;height:60.2px;background:linear-gradient(180deg,#93a0b9 0%,#707a8e 45%,#495060 100%);box-shadow:7px 11px 14px rgba(12,13,18,.55),2px 3px 5px rgba(12,13,18,.35);"><div class="kw" style="inset:2.6px"></div></div>
<div class="kc kd" style="left:1155.8px;top:929.8px;width:40.4px;height:40.4px"><i style="transform:rotate(0deg)"><u style="width:3.4px;height:10.5px;margin-left:-1.7px;top:1.6px"></u></i></div>
<div class="kr" style="left:1551.9px;top:919.9px;width:60.2px;height:60.2px;background:linear-gradient(180deg,#93a0b9 0%,#707a8e 45%,#495060 100%);box-shadow:7px 11px 14px rgba(12,13,18,.55),2px 3px 5px rgba(12,13,18,.35);"><div class="kw" style="inset:2.6px"></div></div>
<div class="kc kd" style="left:1561.8px;top:929.8px;width:40.4px;height:40.4px"><i style="transform:rotate(0deg)"><u style="width:3.4px;height:10.5px;margin-left:-1.7px;top:1.6px"></u></i></div>
<div class="kr" style="left:1337.8px;top:861.5px;width:84.0px;height:84.0px;background:linear-gradient(180deg,#596173 0%,#333843 18%,#272b34 100%);box-shadow:7px 11px 14px rgba(12,13,18,.55),2px 3px 5px rgba(12,13,18,.35);"><div class="kw kwb" style="inset:1.5px"></div></div>
<div class="kc kd kb" style="left:1346.8px;top:870.5px;width:66.0px;height:66.0px"><i style="transform:rotate(-136deg)"><u style="width:5px;height:13.5px;margin-left:-2.5px;top:10.3px"></u></i></div>
<div class="t" style="left:1379.6px;top:967.00px;font-size:21px;color:#e9ebf0;font-weight:700;letter-spacing:0.00px;transform:translateX(-50%) scaleX(0.9766);">POSITION</div>
<div class="t" style="left:1175.7px;top:995.00px;font-size:20px;color:#e9ebf0;font-weight:700;letter-spacing:0.00px;transform:translateX(-50%) scaleX(0.9126);">WAVE</div>
<div class="t" style="left:1581.6px;top:995.00px;font-size:20px;color:#e9ebf0;font-weight:700;letter-spacing:0.00px;transform:translateX(-50%) scaleX(0.8883);">WARP</div>
<div class="kr" style="left:1121.9px;top:1050.4px;width:60.2px;height:60.2px;background:linear-gradient(180deg,#93a0b9 0%,#707a8e 45%,#495060 100%);box-shadow:7px 11px 14px rgba(12,13,18,.55),2px 3px 5px rgba(12,13,18,.35);"><div class="kw" style="inset:2.6px"></div></div>
<div class="kc kd" style="left:1131.8px;top:1060.3px;width:40.4px;height:40.4px"><i style="transform:rotate(0deg)"><u style="width:3.4px;height:10.5px;margin-left:-1.7px;top:1.6px"></u></i></div>
<div class="t" style="left:1151.6px;top:1127.00px;font-size:20px;color:#e9ebf0;font-weight:700;letter-spacing:0.00px;transform:translateX(-50%) scaleX(0.9450);">PITCH</div>
<div class="kr" style="left:1273.9px;top:1050.4px;width:60.2px;height:60.2px;background:linear-gradient(180deg,#93a0b9 0%,#707a8e 45%,#495060 100%);box-shadow:7px 11px 14px rgba(12,13,18,.55),2px 3px 5px rgba(12,13,18,.35);"><div class="kw" style="inset:2.6px"></div></div>
<div class="kc kd" style="left:1283.8px;top:1060.3px;width:40.4px;height:40.4px"><i style="transform:rotate(0deg)"><u style="width:3.4px;height:10.5px;margin-left:-1.7px;top:1.6px"></u></i></div>
<div class="t" style="left:1303.6px;top:1127.00px;font-size:20px;color:#e9ebf0;font-weight:700;letter-spacing:0.00px;transform:translateX(-50%) scaleX(0.9132);">FINE</div>
<div class="kr" style="left:1421.7px;top:1050.4px;width:60.2px;height:60.2px;background:linear-gradient(180deg,#93a0b9 0%,#707a8e 45%,#495060 100%);box-shadow:7px 11px 14px rgba(12,13,18,.55),2px 3px 5px rgba(12,13,18,.35);"><div class="kw" style="inset:2.6px"></div></div>
<div class="kc kd" style="left:1431.6px;top:1060.3px;width:40.4px;height:40.4px"><i style="transform:rotate(0deg)"><u style="width:3.4px;height:10.5px;margin-left:-1.7px;top:1.6px"></u></i></div>
<div class="t" style="left:1451.4px;top:1127.00px;font-size:20px;color:#e9ebf0;font-weight:700;letter-spacing:0.00px;transform:translateX(-50%) scaleX(0.9032);">PAN</div>
<div class="kr" style="left:1573.6px;top:1050.4px;width:60.2px;height:60.2px;background:linear-gradient(180deg,#93a0b9 0%,#707a8e 45%,#495060 100%);box-shadow:7px 11px 14px rgba(12,13,18,.55),2px 3px 5px rgba(12,13,18,.35);"><div class="kw" style="inset:2.6px"></div></div>
<div class="kc kd" style="left:1583.5px;top:1060.3px;width:40.4px;height:40.4px"><i style="transform:rotate(83deg)"><u style="width:3.4px;height:10.5px;margin-left:-1.7px;top:1.6px"></u></i></div>
<div class="t" style="left:1603.3px;top:1127.00px;font-size:20px;color:#e9ebf0;font-weight:700;letter-spacing:0.00px;transform:translateX(-50%) scaleX(0.8751);">LEVEL</div>
<div style="left:1732.0px;top:347.0px;width:572.0px;height:812.0px;border-radius:14px;border:2px solid #4c5465;background:linear-gradient(180deg,#4b5464 0%,#434a59 30%,#3c424f 100%);overflow:hidden;box-shadow:0 2px 6px rgba(0,0,0,.3)"><div style="left:0;top:0;width:100%;height:42px;background:#252931"></div><div style="left:0;top:380.500px;width:100%;height:41.500px;background:#252931"></div><div style="left:0;top:762px;width:100%;height:50px;background:#2a2e38"></div></div>
<div class="t" style="left:1778.6px;top:359.00px;font-size:21px;color:#8f79f6;font-weight:700;letter-spacing:0.00px;transform-origin:0 50%;transform:scaleX(0.9213);">FILTER 1</div>
<div class="t" style="left:2052.4px;top:361.00px;font-size:19.8px;color:#ffffff;font-weight:700;letter-spacing:0.00px;transform:translateX(-50%) scaleX(0.8919);">LP BARBER</div>
<div style="left:1745.5px;top:400.6px;width:545.5px;height:189.2px;border-radius:15px;background:#252932;overflow:hidden;box-shadow:0 0 0 1.500px #555e70,-3px 0 6px rgba(0,0,0,.12)"><div style="left:106.500px;top:0;width:372px;height:100%;background:linear-gradient(100deg,#333842 0%,#31353f 45%,#2c3039 100%)"></div><div style="left:106.500px;top:106.500px;width:372px;height:83px;background:linear-gradient(180deg,#35478a 0%,#2c3a70 45%,#232b4b 100%)"></div><div style="left:106.500px;top:105.500px;width:372px;height:2.200px;background:linear-gradient(90deg,#a174f5,#4b7df2)"></div><div style="left:508.500px;top:14px;width:8px;height:140px;border-radius:4px;background:#a3acc2"></div></div>
<div class="t" style="left:1758.6px;top:413.00px;font-size:19.3px;color:#a3abbe;font-weight:700;letter-spacing:0.00px;transform-origin:0 50%;transform:scaleX(0.9601);">OSC A</div>
<div class="t" style="left:1758.6px;top:449.00px;font-size:19.3px;color:#ffffff;font-weight:700;letter-spacing:0.00px;transform-origin:0 50%;transform:scaleX(0.9407);">OSC B</div>
<div class="t" style="left:1758.6px;top:485.00px;font-size:19.3px;color:#a3abbe;font-weight:700;letter-spacing:0.00px;transform-origin:0 50%;transform:scaleX(0.9392);">GRAINS</div>
<div class="t" style="left:1758.6px;top:521.00px;font-size:19.3px;color:#a3abbe;font-weight:700;letter-spacing:0.00px;transform-origin:0 50%;transform:scaleX(0.9153);">SUB</div>
<div class="t" style="left:1758.6px;top:557.00px;font-size:19.3px;color:#a3abbe;font-weight:700;letter-spacing:0.00px;transform-origin:0 50%;transform:scaleX(0.9450);">SAMPLE</div>
<div style="left:1848.0px;top:445.0px;width:4.5px;height:27.5px;border-radius:2px;background:#8f79f6"></div>
<div class="t" style="left:2258.3px;top:560.00px;font-size:19.3px;color:#ffffff;font-weight:700;letter-spacing:0.00px;transform:translateX(-50%) scaleX(0.9763);">MIX</div>
<div class="kr" style="left:1785.9px;top:622.4px;width:60.2px;height:60.2px;background:linear-gradient(180deg,#93a0b9 0%,#707a8e 45%,#495060 100%);box-shadow:7px 11px 14px rgba(12,13,18,.55),2px 3px 5px rgba(12,13,18,.35);"><div class="kw" style="inset:2.6px"></div></div>
<div class="kc kd" style="left:1795.8px;top:632.3px;width:40.4px;height:40.4px"><i style="transform:rotate(62deg)"><u style="width:3.4px;height:10.5px;margin-left:-1.7px;top:1.6px"></u></i></div>
<div class="t" style="left:1815.6px;top:699.00px;font-size:20px;color:#e9ebf0;font-weight:700;letter-spacing:0.00px;transform:translateX(-50%) scaleX(0.9340);">CUTOFF</div>
<div class="kr" style="left:1939.9px;top:622.4px;width:60.2px;height:60.2px;background:linear-gradient(180deg,#93a0b9 0%,#707a8e 45%,#495060 100%);box-shadow:7px 11px 14px rgba(12,13,18,.55),2px 3px 5px rgba(12,13,18,.35);"><div class="kw" style="inset:2.6px"></div></div>
<div class="kc ks" style="left:1949.8px;top:632.3px;width:40.4px;height:40.4px"><i style="transform:rotate(-62deg)"><u style="width:3.4px;height:10.5px;margin-left:-1.7px;top:1.6px"></u></i></div>
<div class="t" style="left:1969.6px;top:699.00px;font-size:20px;color:#e9ebf0;font-weight:700;letter-spacing:0.00px;transform:translateX(-50%) scaleX(0.9257);">RESONANCE</div>
<div class="kr" style="left:2069.6px;top:622.4px;width:60.2px;height:60.2px;background:linear-gradient(180deg,#93a0b9 0%,#707a8e 45%,#495060 100%);box-shadow:7px 11px 14px rgba(12,13,18,.55),2px 3px 5px rgba(12,13,18,.35);"><div class="kw" style="inset:2.6px"></div></div>
<div class="kc ks" style="left:2079.5px;top:632.3px;width:40.4px;height:40.4px"><i style="transform:rotate(0deg)"><u style="width:3.4px;height:10.5px;margin-left:-1.7px;top:1.6px"></u></i></div>
<div class="t" style="left:2099.3px;top:699.00px;font-size:20px;color:#e9ebf0;font-weight:700;letter-spacing:0.00px;transform:translateX(-50%) scaleX(0.8950);">SPREAD</div>
<div class="kr" style="left:2199.7px;top:622.4px;width:60.2px;height:60.2px;background:linear-gradient(180deg,#93a0b9 0%,#707a8e 45%,#495060 100%);box-shadow:7px 11px 14px rgba(12,13,18,.55),2px 3px 5px rgba(12,13,18,.35);"><div class="kw" style="inset:2.6px"></div></div>
<div class="kc ks" style="left:2209.6px;top:632.3px;width:40.4px;height:40.4px"><i style="transform:rotate(-136deg)"><u style="width:3.4px;height:10.5px;margin-left:-1.7px;top:1.6px"></u></i></div>
<div class="t" style="left:2229.4px;top:699.00px;font-size:20px;color:#e9ebf0;font-weight:700;letter-spacing:0.00px;transform:translateX(-50%) scaleX(0.9228);">MORPH</div>
<div class="t" style="left:1778.6px;top:739.00px;font-size:21px;color:#8f79f6;font-weight:700;letter-spacing:0.00px;transform-origin:0 50%;transform:scaleX(0.9615);">FILTER 2</div>
<div class="t" style="left:2052.4px;top:742.00px;font-size:19.8px;color:#ffffff;font-weight:700;letter-spacing:0.00px;transform:translateX(-50%) scaleX(0.9770);">VARI-NOTCH</div>
<div style="left:1745.5px;top:781.1px;width:545.5px;height:189.2px;border-radius:15px;background:#252932;overflow:hidden;box-shadow:0 0 0 1.500px #555e70,-3px 0 6px rgba(0,0,0,.12)"><div style="left:106.500px;top:0;width:372px;height:100%;background:linear-gradient(100deg,#333842 0%,#31353f 45%,#2c3039 100%)"></div><div style="left:106.500px;top:106.500px;width:372px;height:83px;background:linear-gradient(180deg,#35478a 0%,#2c3a70 45%,#232b4b 100%)"></div><div style="left:106.500px;top:105.500px;width:372px;height:2.200px;background:linear-gradient(90deg,#a174f5,#4b7df2)"></div><div style="left:508.500px;top:14px;width:8px;height:140px;border-radius:4px;background:#a3acc2"></div></div>
<div class="t" style="left:1758.6px;top:794.00px;font-size:19.3px;color:#ffffff;font-weight:700;letter-spacing:0.00px;transform-origin:0 50%;transform:scaleX(0.9601);">OSC A</div>
<div class="t" style="left:1758.6px;top:830.00px;font-size:19.3px;color:#a3abbe;font-weight:700;letter-spacing:0.00px;transform-origin:0 50%;transform:scaleX(0.9407);">OSC B</div>
<div class="t" style="left:1758.6px;top:866.00px;font-size:19.3px;color:#a3abbe;font-weight:700;letter-spacing:0.00px;transform-origin:0 50%;transform:scaleX(0.9392);">GRAINS</div>
<div class="t" style="left:1758.6px;top:902.00px;font-size:19.3px;color:#a3abbe;font-weight:700;letter-spacing:0.00px;transform-origin:0 50%;transform:scaleX(0.9153);">SUB</div>
<div class="t" style="left:1758.6px;top:938.00px;font-size:19.3px;color:#a3abbe;font-weight:700;letter-spacing:0.00px;transform-origin:0 50%;transform:scaleX(0.9450);">SAMPLE</div>
<div style="left:1848.0px;top:789.5px;width:4.5px;height:27.5px;border-radius:2px;background:#8f79f6"></div>
<div style="left:1848.0px;top:825.5px;width:4.5px;height:27.5px;border-radius:2px;background:#a3acc2"></div>
<div class="t" style="left:2258.3px;top:940.00px;font-size:19.3px;color:#ffffff;font-weight:700;letter-spacing:0.00px;transform:translateX(-50%) scaleX(0.9763);">MIX</div>
<div class="kr" style="left:1785.9px;top:1002.9px;width:60.2px;height:60.2px;background:linear-gradient(180deg,#93a0b9 0%,#707a8e 45%,#495060 100%);box-shadow:7px 11px 14px rgba(12,13,18,.55),2px 3px 5px rgba(12,13,18,.35);"><div class="kw" style="inset:2.6px"></div></div>
<div class="kc kd" style="left:1795.8px;top:1012.8px;width:40.4px;height:40.4px"><i style="transform:rotate(2deg)"><u style="width:3.4px;height:10.5px;margin-left:-1.7px;top:1.6px"></u></i></div>
<div class="t" style="left:1815.6px;top:1079.00px;font-size:20px;color:#e9ebf0;font-weight:700;letter-spacing:0.00px;transform:translateX(-50%) scaleX(0.9340);">CUTOFF</div>
<div class="kr" style="left:1939.9px;top:1002.9px;width:60.2px;height:60.2px;background:linear-gradient(180deg,#93a0b9 0%,#707a8e 45%,#495060 100%);box-shadow:7px 11px 14px rgba(12,13,18,.55),2px 3px 5px rgba(12,13,18,.35);"><div class="kw" style="inset:2.6px"></div></div>
<div class="kc ks" style="left:1949.8px;top:1012.8px;width:40.4px;height:40.4px"><i style="transform:rotate(-66deg)"><u style="width:3.4px;height:10.5px;margin-left:-1.7px;top:1.6px"></u></i></div>
<div class="t" style="left:1969.6px;top:1079.00px;font-size:20px;color:#e9ebf0;font-weight:700;letter-spacing:0.00px;transform:translateX(-50%) scaleX(0.9257);">RESONANCE</div>
<div class="kr" style="left:2069.6px;top:1002.9px;width:60.2px;height:60.2px;background:linear-gradient(180deg,#93a0b9 0%,#707a8e 45%,#495060 100%);box-shadow:7px 11px 14px rgba(12,13,18,.55),2px 3px 5px rgba(12,13,18,.35);"><div class="kw" style="inset:2.6px"></div></div>
<div class="kc ks" style="left:2079.5px;top:1012.8px;width:40.4px;height:40.4px"><i style="transform:rotate(0deg)"><u style="width:3.4px;height:10.5px;margin-left:-1.7px;top:1.6px"></u></i></div>
<div class="t" style="left:2099.3px;top:1079.00px;font-size:20px;color:#e9ebf0;font-weight:700;letter-spacing:0.00px;transform:translateX(-50%) scaleX(0.8950);">SPREAD</div>
<div class="kr" style="left:2199.7px;top:1002.9px;width:60.2px;height:60.2px;background:linear-gradient(180deg,#93a0b9 0%,#707a8e 45%,#495060 100%);box-shadow:7px 11px 14px rgba(12,13,18,.55),2px 3px 5px rgba(12,13,18,.35);"><div class="kw" style="inset:2.6px"></div></div>
<div class="kc ks" style="left:2209.6px;top:1012.8px;width:40.4px;height:40.4px"><i style="transform:rotate(-136deg)"><u style="width:3.4px;height:10.5px;margin-left:-1.7px;top:1.6px"></u></i></div>
<div class="t" style="left:2229.4px;top:1079.00px;font-size:20px;color:#e9ebf0;font-weight:700;letter-spacing:0.00px;transform:translateX(-50%) scaleX(0.9228);">MORPH</div>
<div class="t" style="left:1874.2px;top:1125.00px;font-size:19.5px;color:#8f79f6;font-weight:700;letter-spacing:0.00px;transform:translateX(-50%) scaleX(0.9031);">SERIES</div>
<div class="t" style="left:2160.1px;top:1125.00px;font-size:19.5px;color:#a3abbe;font-weight:700;letter-spacing:0.00px;transform:translateX(-50%) scaleX(0.9196);">PARALLEL</div>
<div style="left:2017.0px;top:1124.0px;width:2.0px;height:22.0px;background:#566073"></div>
<div class="t" style="left:343.3px;top:1243.6px;font-size:19px;color:#a9b0c1;font-weight:400;letter-spacing:0.36px;margin-right:-0.36px;transform:translate(-50%,-50%) rotate(-90deg)">AMP</div>
<div class="t" style="left:533.3px;top:1244.5px;font-size:19px;color:#a9b0c1;font-weight:400;letter-spacing:-0.37px;margin-right:0.37px;transform:translate(-50%,-50%) rotate(-90deg)">MODS</div>
<div class="t" style="left:2006.3px;top:1244px;font-size:19px;color:#a9b0c1;font-weight:400;letter-spacing:-0.66px;margin-right:0.66px;transform:translate(-50%,-50%) rotate(-90deg)">KEYBOARD</div>
<div style="left:356.0px;top:1185.5px;width:156.0px;height:119.0px;border-radius:15px;border:2px solid #4a5262;background:linear-gradient(170deg,#49505f 0%,#3d4350 45%,#2f333e 100%);overflow:hidden;box-shadow:2px 3px 6px rgba(0,0,0,.35)"><div style="left:0;top:0;width:100%;height:39.500px;background:#252931;border-bottom:2px solid #4a5262"></div></div>
<div class="t" style="left:398.6px;top:1197.00px;font-size:19px;color:#c5cad6;font-weight:400;letter-spacing:0.00px;transform-origin:0 50%;transform:scaleX(0.9624);-webkit-text-stroke:0.4px #c5cad6;">ENV</div>
<div style="left:546.3px;top:1185.5px;width:155.5px;height:119.0px;border-radius:15px 0 0 15px;border:2px solid #4a5262;background:#262a33;overflow:hidden;box-shadow:2px 3px 6px rgba(0,0,0,.3)"><div style="left:0;top:0;width:100%;height:39.500px;background:#262a33;border-bottom:2px solid #4a5262"></div></div>
<div class="t" style="left:588.3px;top:1197.00px;font-size:19px;color:#c5cad6;font-weight:400;letter-spacing:0.00px;transform-origin:0 50%;transform:scaleX(0.9624);-webkit-text-stroke:0.4px #c5cad6;">ENV</div>
<div class="t" style="left:685.3px;top:1197.00px;font-size:19px;color:#c5cad6;font-weight:400;letter-spacing:0.00px;transform-origin:100% 50%;transform:translateX(-100%);-webkit-text-stroke:0.4px #c5cad6;">1</div>
<div style="left:706.3px;top:1185.5px;width:155.5px;height:119.0px;border-radius:0;border:2px solid #4a5262;background:#262a33;overflow:hidden;box-shadow:2px 3px 6px rgba(0,0,0,.3)"><div style="left:0;top:0;width:100%;height:39.500px;background:#262a33;border-bottom:2px solid #4a5262"></div></div>
<div class="t" style="left:748.3px;top:1197.00px;font-size:19px;color:#c5cad6;font-weight:400;letter-spacing:0.00px;transform-origin:0 50%;transform:scaleX(0.9624);-webkit-text-stroke:0.4px #c5cad6;">ENV</div>
<div class="t" style="left:845.3px;top:1197.00px;font-size:19px;color:#c5cad6;font-weight:400;letter-spacing:0.00px;transform-origin:100% 50%;transform:translateX(-100%);-webkit-text-stroke:0.4px #c5cad6;">2</div>
<div style="left:866.3px;top:1185.5px;width:155.5px;height:119.0px;border-radius:0;border:2px solid #4a5262;background:#262a33;overflow:hidden;box-shadow:2px 3px 6px rgba(0,0,0,.3)"><div style="left:0;top:0;width:100%;height:39.500px;background:#262a33;border-bottom:2px solid #4a5262"></div></div>
<div class="t" style="left:908.3px;top:1197.00px;font-size:19px;color:#c5cad6;font-weight:400;letter-spacing:0.00px;transform-origin:0 50%;transform:scaleX(0.9256);-webkit-text-stroke:0.4px #c5cad6;">LFO</div>
<div class="t" style="left:1005.3px;top:1197.00px;font-size:19px;color:#c5cad6;font-weight:400;letter-spacing:0.00px;transform-origin:100% 50%;transform:translateX(-100%);-webkit-text-stroke:0.4px #c5cad6;">3</div>
<div style="left:1026.3px;top:1185.5px;width:155.5px;height:119.0px;border-radius:0;border:2px solid #4a5262;background:linear-gradient(180deg,#434a58 0%,#2f333e 100%);overflow:hidden;box-shadow:2px 3px 6px rgba(0,0,0,.3)"><div style="left:0;top:0;width:100%;height:39.500px;background:#262a33;border-bottom:2px solid #4a5262"></div></div>
<div class="t" style="left:1068.3px;top:1197.00px;font-size:19px;color:#c5cad6;font-weight:400;letter-spacing:0.00px;transform-origin:0 50%;transform:scaleX(0.9256);-webkit-text-stroke:0.4px #c5cad6;">LFO</div>
<div class="t" style="left:1165.3px;top:1197.00px;font-size:19px;color:#c5cad6;font-weight:400;letter-spacing:0.00px;transform-origin:100% 50%;transform:translateX(-100%);-webkit-text-stroke:0.4px #c5cad6;">4</div>
<div style="left:1186.3px;top:1185.5px;width:155.5px;height:119.0px;border-radius:0;border:2px solid #d5d9e4;background:linear-gradient(180deg,#434a58 0%,#2f333e 100%);overflow:hidden;box-shadow:2px 3px 6px rgba(0,0,0,.3)"><div style="left:0;top:0;width:100%;height:39.500px;background:#262a33;border-bottom:2px solid #d5d9e4"></div></div>
<div class="t" style="left:1228.3px;top:1197.00px;font-size:19px;color:#c5cad6;font-weight:400;letter-spacing:0.00px;transform-origin:0 50%;transform:scaleX(0.9256);-webkit-text-stroke:0.4px #c5cad6;">LFO</div>
<div class="t" style="left:1325.3px;top:1197.00px;font-size:19px;color:#c5cad6;font-weight:400;letter-spacing:0.00px;transform-origin:100% 50%;transform:translateX(-100%);-webkit-text-stroke:0.4px #c5cad6;">5</div>
<div style="left:1346.3px;top:1185.5px;width:155.5px;height:119.0px;border-radius:0;border:2px solid #4a5262;background:#262a33;overflow:hidden;box-shadow:2px 3px 6px rgba(0,0,0,.3)"><div style="left:0;top:0;width:100%;height:39.500px;background:#262a33;border-bottom:2px solid #4a5262"></div></div>
<div class="t" style="left:1388.3px;top:1197.00px;font-size:19px;color:#c5cad6;font-weight:400;letter-spacing:0.00px;transform-origin:0 50%;transform:scaleX(0.9597);-webkit-text-stroke:0.4px #c5cad6;">CURVE</div>
<div class="t" style="left:1485.3px;top:1197.00px;font-size:19px;color:#c5cad6;font-weight:400;letter-spacing:0.00px;transform-origin:100% 50%;transform:translateX(-100%);-webkit-text-stroke:0.4px #c5cad6;">6</div>
<div style="left:1506.3px;top:1185.5px;width:155.5px;height:119.0px;border-radius:0;border:2px solid #4a5262;background:#262a33;overflow:hidden;box-shadow:2px 3px 6px rgba(0,0,0,.3)"><div style="left:0;top:0;width:100%;height:39.500px;background:#262a33;border-bottom:2px solid #4a5262"></div></div>
<div class="t" style="left:1548.3px;top:1197.00px;font-size:19px;color:#c5cad6;font-weight:400;letter-spacing:0.00px;transform-origin:0 50%;transform:scaleX(0.9597);-webkit-text-stroke:0.4px #c5cad6;">CURVE</div>
<div class="t" style="left:1645.3px;top:1197.00px;font-size:19px;color:#c5cad6;font-weight:400;letter-spacing:0.00px;transform-origin:100% 50%;transform:translateX(-100%);-webkit-text-stroke:0.4px #c5cad6;">7</div>
<div style="left:1666.3px;top:1185.5px;width:155.5px;height:119.0px;border-radius:0;border:2px solid #4a5262;background:#262a33;overflow:hidden;box-shadow:2px 3px 6px rgba(0,0,0,.3)"><div style="left:0;top:0;width:100%;height:39.500px;background:#262a33;border-bottom:2px solid #4a5262"></div></div>
<div class="t" style="left:1708.3px;top:1197.00px;font-size:19px;color:#c5cad6;font-weight:400;letter-spacing:0.00px;transform-origin:0 50%;transform:scaleX(0.9597);-webkit-text-stroke:0.4px #c5cad6;">CURVE</div>
<div class="t" style="left:1805.3px;top:1197.00px;font-size:19px;color:#c5cad6;font-weight:400;letter-spacing:0.00px;transform-origin:100% 50%;transform:translateX(-100%);-webkit-text-stroke:0.4px #c5cad6;">8</div>
<div style="left:1826.3px;top:1185.5px;width:155.5px;height:119.0px;border-radius:0 15px 15px 0;border:2px solid #4a5262;background:#262a33;overflow:hidden;box-shadow:2px 3px 6px rgba(0,0,0,.3)"><div style="left:0;top:0;width:100%;height:39.500px;background:#262a33;border-bottom:2px solid #4a5262"></div></div>
<div class="t" style="left:1868.3px;top:1197.00px;font-size:19px;color:#c5cad6;font-weight:400;letter-spacing:0.00px;transform-origin:0 50%;transform:scaleX(0.9411);-webkit-text-stroke:0.4px #c5cad6;">FOLLOW</div>
<div class="t" style="left:1965.0px;top:1197.00px;font-size:19px;color:#c5cad6;font-weight:400;letter-spacing:0.00px;transform-origin:100% 50%;transform:translateX(-100%);-webkit-text-stroke:0.4px #c5cad6;">9</div>
<div style="left:2022.5px;top:1185.5px;width:295.5px;height:119.0px;border-radius:15px;border:2px solid #4a5262;background:#262a33;overflow:hidden;box-shadow:2px 3px 6px rgba(0,0,0,.3)"><div style="left:35.5px;top:0;width:2px;height:100%;background:#4a5262"></div><div style="left:95.5px;top:0;width:2px;height:100%;background:#4a5262"></div><div style="left:133.5px;top:0;width:2px;height:100%;background:#4a5262"></div><div style="left:193.5px;top:0;width:2px;height:100%;background:#4a5262"></div><div style="left:231.5px;top:0;width:2px;height:100%;background:#4a5262"></div><div style="left:0;top:57.500px;width:100%;height:2px;background:#4a5262"></div></div>
<div class="t" style="left:2090.0px;top:1207.00px;font-size:19px;color:#b9bfcd;font-weight:400;letter-spacing:0.00px;transform:translateX(-50%) scaleX(0.9574);-webkit-text-stroke:0.4px #b9bfcd;">KEY</div>
<div class="t" style="left:2188.0px;top:1207.00px;font-size:19px;color:#b9bfcd;font-weight:400;letter-spacing:0.00px;transform:translateX(-50%) scaleX(0.9607);-webkit-text-stroke:0.4px #b9bfcd;">VEL</div>
<div class="t" style="left:2286.0px;top:1207.00px;font-size:19px;color:#b9bfcd;font-weight:400;letter-spacing:0.00px;transform:translateX(-50%) scaleX(0.9035);-webkit-text-stroke:0.4px #b9bfcd;">PB</div>
<div class="t" style="left:2090.0px;top:1265.00px;font-size:19px;color:#b9bfcd;font-weight:400;letter-spacing:0.00px;transform:translateX(-50%) scaleX(0.9746);-webkit-text-stroke:0.4px #b9bfcd;">MOD</div>
<div class="t" style="left:2188.0px;top:1265.00px;font-size:19px;color:#b9bfcd;font-weight:400;letter-spacing:0.00px;transform:translateX(-50%) scaleX(0.9782);-webkit-text-stroke:0.4px #b9bfcd;">AFT</div>
<div class="t" style="left:2286.0px;top:1265.00px;font-size:19px;color:#b9bfcd;font-weight:400;letter-spacing:0.00px;transform:translateX(-50%) scaleX(0.9424);-webkit-text-stroke:0.4px #b9bfcd;">OFF</div>
<div style="left:330.0px;top:1319.0px;width:1988.0px;height:284.0px;border-radius:16px;background:#464e5d;box-shadow:0 3px 8px rgba(0,0,0,.35)"></div>
<div style="left:338.5px;top:1327.5px;width:1071.0px;height:267.5px;border-radius:14px;border:2px solid #2a2e38;background:linear-gradient(160deg,#505868 0%,#464d5c 35%,#3a404d 75%,#363c48 100%)"></div>
<div style="left:1418.5px;top:1321.0px;width:897.5px;height:280.0px;border-radius:0 14px 14px 0;background:linear-gradient(103deg,#2d313b 0%,#2c303a 48%,#282c35 58%,#272b34 100%);overflow:hidden"><div style="left:0;bottom:0;width:100%;height:42.500px;background:#262a33"></div></div>
<svg style="position:absolute;left:0;top:0" width="2486" height="1764" viewBox="0 0 2486 1764"><path d="M382.700,1328.500 H561.600 L543.500,1353 a8,8 0 0 1 -6.500,3.500 H408.500 a8,8 0 0 1 -6.500,-3.500 Z" fill="#252931"/><path d="M1175.200,1328.500 H1355.400 L1337,1353 a8,8 0 0 1 -6.500,3.500 H1201.500 a8,8 0 0 1 -6.500,-3.500 Z" fill="#252931"/></svg>
<div class="t" style="left:471.1px;top:1333.00px;font-size:20px;color:#ffffff;font-weight:700;letter-spacing:0.00px;transform:translateX(-50%) scaleX(0.9466);">SYNC</div>
<div class="t" style="left:1264.2px;top:1332.00px;font-size:20px;color:#8f79f6;font-weight:700;letter-spacing:0.00px;transform:translateX(-50%) scaleX(0.9034);">SNAP</div>
<div style="left:788.5px;top:1337.5px;width:172.8px;height:33.5px;border-radius:17px;background:linear-gradient(180deg,#4a5262,#414857);border:1px solid #565e70;box-shadow:1px 3px 5px rgba(0,0,0,.3)"></div>
<div class="t" style="left:874.3px;top:1345.00px;font-size:20.5px;color:#ffffff;font-weight:700;letter-spacing:0.00px;transform:translateX(-50%) scaleX(0.8322);">FREE</div>
<div class="kr" style="left:430.0px;top:1415.5px;width:84.0px;height:84.0px;background:linear-gradient(180deg,#596173 0%,#333843 18%,#272b34 100%);box-shadow:7px 11px 14px rgba(12,13,18,.55),2px 3px 5px rgba(12,13,18,.35);"><div class="kw kwb" style="inset:1.5px"></div></div>
<div class="kc kd kb" style="left:439.0px;top:1424.5px;width:66.0px;height:66.0px"><i style="transform:rotate(-73deg)"><u style="width:5px;height:13.5px;margin-left:-2.5px;top:10.3px"></u></i></div>
<div class="t" style="left:471.4px;top:1521.00px;font-size:21px;color:#e9ebf0;font-weight:700;letter-spacing:0.00px;transform:translateX(-50%) scaleX(0.9243);">RATE</div>
<div class="kr" style="left:701.9px;top:1415.5px;width:84.0px;height:84.0px;background:linear-gradient(180deg,#596173 0%,#333843 18%,#272b34 100%);box-shadow:7px 11px 14px rgba(12,13,18,.55),2px 3px 5px rgba(12,13,18,.35);"><div class="kw kwb" style="inset:1.5px"></div></div>
<div class="kc kd kb" style="left:710.9px;top:1424.5px;width:66.0px;height:66.0px"><i style="transform:rotate(-136deg)"><u style="width:5px;height:13.5px;margin-left:-2.5px;top:10.3px"></u></i></div>
<div class="t" style="left:743.3px;top:1521.00px;font-size:21px;color:#e9ebf0;font-weight:700;letter-spacing:0.00px;transform:translateX(-50%) scaleX(0.9783);">RANDOMIZE</div>
<div class="kr" style="left:961.3px;top:1415.5px;width:84.0px;height:84.0px;background:linear-gradient(180deg,#596173 0%,#333843 18%,#272b34 100%);box-shadow:7px 11px 14px rgba(12,13,18,.55),2px 3px 5px rgba(12,13,18,.35);"><div class="kw kwb" style="inset:1.5px"></div></div>
<div class="kc kd kb" style="left:970.3px;top:1424.5px;width:66.0px;height:66.0px"><i style="transform:rotate(136deg)"><u style="width:5px;height:13.5px;margin-left:-2.5px;top:10.3px"></u></i></div>
<div class="t" style="left:1002.7px;top:1521.00px;font-size:21px;color:#e9ebf0;font-weight:700;letter-spacing:0.00px;transform:translateX(-50%) scaleX(0.9014);">LEVEL</div>
<div class="kr" style="left:1224.0px;top:1415.5px;width:84.0px;height:84.0px;background:linear-gradient(180deg,#596173 0%,#333843 18%,#272b34 100%);box-shadow:7px 11px 14px rgba(12,13,18,.55),2px 3px 5px rgba(12,13,18,.35);"><div class="kw kwb" style="inset:1.5px"></div></div>
<div class="kc kd kb" style="left:1233.0px;top:1424.5px;width:66.0px;height:66.0px"><i style="transform:rotate(-136deg)"><u style="width:5px;height:13.5px;margin-left:-2.5px;top:10.3px"></u></i></div>
<div class="t" style="left:1265.4px;top:1521.00px;font-size:21px;color:#e9ebf0;font-weight:700;letter-spacing:0.00px;transform:translateX(-50%) scaleX(0.9509);">SHAPE</div>
<div style="left:1417.5px;top:1321.0px;width:2.0px;height:237.5px;background:#e070e8"></div>
<div class="t" style="left:1568.0px;top:1575.00px;font-size:19px;color:#a3abbe;font-weight:400;letter-spacing:0.5px;-webkit-text-stroke:0.3px #a3abbe;transform-origin:0 50%;transform:scaleX(0.9827)">PHASE<b style="color:#f1f2f6;margin-left:12px;letter-spacing:0.2px;-webkit-text-stroke:0">0°</b></div>
<div class="t" style="left:2031.5px;top:1575.00px;font-size:19px;color:#a3abbe;font-weight:400;letter-spacing:0.5px;-webkit-text-stroke:0.3px #a3abbe;transform-origin:0 50%;transform:scaleX(0.9653)">FADE IN<b style="color:#f1f2f6;margin-left:12px;letter-spacing:0.2px;-webkit-text-stroke:0">0</b></div>
<div style="left:1842.0px;top:1570.0px;width:2.0px;height:18.0px;background:#566073"></div>
<svg id="ov" width="2486" height="1764" viewBox="0 0 2486 1764">
<defs>
<linearGradient id="litg" x1="0" y1="0" x2="0" y2="1"><stop offset="0" stop-color="#c2c6d1"/><stop offset="0.7" stop-color="#b0b5c3"/><stop offset="1" stop-color="#9398a8"/></linearGradient>
<linearGradient id="wfA" gradientUnits="userSpaceOnUse" x1="0" y1="431" x2="0" y2="648"><stop offset="0" stop-color="#6e5fd6" stop-opacity="0.7"/><stop offset="0.3" stop-color="#6758c8" stop-opacity="0.46"/><stop offset="0.5" stop-color="#5c50b0" stop-opacity="0"/><stop offset="0.62" stop-color="#6254b8" stop-opacity="0.25"/><stop offset="1" stop-color="#6e5fd6" stop-opacity="0.85"/></linearGradient>
<linearGradient id="wfL" gradientUnits="userSpaceOnUse" x1="0" y1="1368" x2="0" y2="1553"><stop offset="0" stop-color="#6e5fd6" stop-opacity="0.8"/><stop offset="0.5" stop-color="#5c50b0" stop-opacity="0"/><stop offset="1" stop-color="#6e5fd6" stop-opacity="0.8"/></linearGradient>
<linearGradient id="flt" x1="0" y1="0" x2="0" y2="1"><stop offset="0" stop-color="#364a8e"/><stop offset="1" stop-color="#252f55"/></linearGradient>
<linearGradient id="fltl" x1="0" y1="0" x2="1" y2="0"><stop offset="0" stop-color="#a174f5"/><stop offset="1" stop-color="#4b7df2"/></linearGradient>
<filter id="sh2" x="-50%" y="-50%" width="200%" height="200%"><feDropShadow dx="1" dy="2" stdDeviation="2" flood-color="#000" flood-opacity="0.4"/></filter>
<linearGradient id="modp" x1="0" y1="0" x2="0.3" y2="1"><stop offset="0" stop-color="#475060"/><stop offset="1" stop-color="#3d4452"/></linearGradient>
<filter id="sh3" x="-5%" y="-5%" width="110%" height="115%"><feDropShadow dx="1" dy="3" stdDeviation="3" flood-color="#000" flood-opacity="0.28"/></filter>
</defs>

<circle cx="163" cy="162" r="8.7" fill="#fe5f57" stroke="#e2463f" stroke-width="0.8"/>
<circle cx="193" cy="162" r="8.7" fill="#dfd7d6" stroke="#c9c1c0" stroke-width="0.8"/>
<circle cx="223" cy="162" r="8.7" fill="#28c840" stroke="#1eab30" stroke-width="0.8"/>
<path d="M169.8,206.1 H184.9 V206.9 C181.5,207.6 180.5,211.6 175.5,211.6 H169.8 Z" fill="#6b788f"/><path d="M184.9,200.9 C189.5,200.7 192.5,201.5 196.5,203.7 C200.5,205.9 203,206.1 207.5,206.1 H216.1 V211.6 H207.5 C203,211.6 200.5,211.4 196.5,209.2 C192.5,207.0 189.5,206.2 184.9,206.4 Z" fill="#6b788f"/><path d="M169.8,216.9 H184.9 V217.70000000000002 C181.5,218.4 180.5,222.4 175.5,222.4 H169.8 Z" fill="#6b788f"/><path d="M184.9,211.70000000000002 C189.5,211.5 192.5,212.3 196.5,214.5 C200.5,216.70000000000002 203,216.9 207.5,216.9 H216.1 V222.4 H207.5 C203,222.4 200.5,222.20000000000002 196.5,220.0 C192.5,217.8 189.5,217.0 184.9,217.20000000000002 Z" fill="#6b788f"/><path d="M169.8,227.6 H184.9 V228.4 C181.5,229.1 180.5,233.1 175.5,233.1 H169.8 Z" fill="#6b788f"/><path d="M184.9,222.4 C189.5,222.2 192.5,223.0 196.5,225.2 C200.5,227.4 203,227.6 207.5,227.6 H216.1 V233.1 H207.5 C203,233.1 200.5,232.9 196.5,230.7 C192.5,228.5 189.5,227.7 184.9,227.9 Z" fill="#6b788f"/>
<path d="M677.800,230.200 c0,-8.500 6,-13.600 14.200,-13.600 s14.200,5.100 14.200,13.600 z" fill="#e6e7ec"/><circle cx="691.900" cy="210.800" r="8.600" fill="#2e333e"/><circle cx="691.900" cy="210.800" r="7.200" fill="#e6e7ec"/>
<g transform="translate(0.3,-0.8)"><path d="M749.6,203.5 c-1.5,0 -2.4,1 -2.4,2.2 c-5,1.4 -7,5.6 -7,10.6 c0,5 -1.6,7.4 -3,9.2 v1.4 h24.8 v-1.4 c-1.400,-1.800 -3,-4.200 -3,-9.200 c0,-5 -2,-9.200 -7,-10.600 c0,-1.200 -0.900,-2.200 -2.400,-2.200 z" fill="#e6e7ec"/><path d="M745.800,228.800 a3.900,3.900 0 0 0 7.600,0 z" fill="#e6e7ec"/></g><circle cx="763.9" cy="201" r="6.100" fill="#fd4444"/>
<path d="M949.2,206.5L936.2,217.0L949.2,227.5" stroke="#c9cdd8" stroke-width="2.6" fill="none" stroke-linejoin="miter"/>
<path d="M1538.5,206.5L1551.5,217.0L1538.5,227.5" stroke="#c9cdd8" stroke-width="2.6" fill="none" stroke-linejoin="miter"/>
<g fill="none" stroke="#e9eaef" stroke-linejoin="round"><path stroke-width="3" d="M1729.500,205.300 H1743.500 L1749.500,211.500 V225.600 a3,3 0 0 1 -3,3 H1729.500 a3,3 0 0 1 -3,-3 V208.300 a3,3 0 0 1 3,-3 Z"/><path stroke-width="2.400" d="M1733.400,228.600 V223 a2.500,2.500 0 0 1 2.500,-2.500 H1740.400 a2.500,2.500 0 0 1 2.500,2.500 V228.600"/><path stroke-width="2.600" stroke-linecap="round" d="M1732.800,213.400 H1738.700"/></g>
<path d="M1793.43,206.80L1793.77,203.98L1798.03,203.98L1798.37,206.80A10.2,10.2 0 0 1 1801.15,207.96L1801.15,207.96L1803.39,206.20L1806.40,209.21L1804.64,211.45A10.2,10.2 0 0 1 1805.80,214.23L1805.80,214.23L1808.62,214.57L1808.62,218.83L1805.80,219.17A10.2,10.2 0 0 1 1804.64,221.95L1804.64,221.95L1806.40,224.19L1803.39,227.20L1801.15,225.44A10.2,10.2 0 0 1 1798.37,226.60L1798.37,226.60L1798.03,229.42L1793.77,229.42L1793.43,226.60A10.2,10.2 0 0 1 1790.65,225.44L1790.65,225.44L1788.41,227.20L1785.40,224.19L1787.16,221.95A10.2,10.2 0 0 1 1786.00,219.17L1786.00,219.17L1783.18,218.83L1783.18,214.57L1786.00,214.23A10.2,10.2 0 0 1 1787.16,211.45L1787.16,211.45L1785.40,209.21L1788.41,206.20L1790.65,207.96A10.2,10.2 0 0 1 1793.43,206.80Z" fill="none" stroke="#e9eaef" stroke-width="2.800" stroke-linejoin="round"/><circle cx="1795.9" cy="216.7" r="5.500" fill="none" stroke="#e9eaef" stroke-width="3"/>
<path d="M1843.800,225.200 A6.300,6.300 0 0 1 1846.100,213.200 A8.500,8.500 0 0 1 1861.500,213.500 A5.800,5.800 0 0 1 1862,225.200 Z" fill="none" stroke="#e9eaef" stroke-width="3.200" stroke-linejoin="round"/>
<path d="M2282.500,223 h4.500 l7,-12 h6.500" fill="none" stroke="#e6e7ec" stroke-width="2.4" stroke-linejoin="round"/>
<path d="M198.500,331 v-19.500 a3.500,3.500 0 0 1 3.500,-3.500 h15.500 a3.500,3.500 0 0 1 3.500,3.500 v14.500 a3.500,3.500 0 0 0 3.500,3.500 h17.500 a3.500,3.500 0 0 0 3.500,-3.500 v-18" fill="none" stroke="#9ba5ba" stroke-width="3.2"/>
<path d="M204.3,427.8 V461.2" stroke="#6b768c" stroke-width="3.2" stroke-linecap="round"/><ellipse cx="204.3" cy="446" rx="6.6" ry="5.2" fill="#6b768c"/>
<path d="M222,427.8 V461.2" stroke="#6b768c" stroke-width="3.2" stroke-linecap="round"/><ellipse cx="222" cy="435.5" rx="6.6" ry="5.2" fill="#6b768c"/>
<path d="M239.5,427.8 V461.2" stroke="#6b768c" stroke-width="3.2" stroke-linecap="round"/><ellipse cx="239.5" cy="455.4" rx="6.6" ry="5.2" fill="#6b768c"/>
<path d="M198.1,562.8 H206 C216,562.8 222,555.0 233,555.0 H246 V562.1 H233 C222,562.1 216,569.9 206,569.9 H198.1 Z" fill="#6b768c"/><path d="M198.1,572.2 H206 C216,572.2 222,564.4000000000001 233,564.4000000000001 H246 V571.5000000000001 H233 C222,571.5000000000001 216,579.3000000000001 206,579.3000000000001 H198.1 Z" fill="#6b768c"/><path d="M198.1,581.7 H206 C216,581.7 222,573.9000000000001 233,573.9000000000001 H246 V581.0000000000001 H233 C222,581.0000000000001 216,588.8000000000001 206,588.8000000000001 H198.1 Z" fill="#6b768c"/>
<circle cx="223.7" cy="692.8" r="20" fill="#4a5163" filter="url(#sh2)"/>
<circle cx="223.7" cy="692.8" r="19" fill="none" stroke="#5a6274" stroke-width="1"/>
<circle cx="223.7" cy="692.8" r="15.4" fill="#8f79f6"/>
<path d="M221.80,686.64L221.80,698.96L212.80,692.80Z" fill="#2b2f3c"/>
<path d="M225.60,686.64L225.60,698.96L234.60,692.80Z" fill="#2b2f3c"/>
<path d="M196.05,803.63A39.80,39.80 0 1 1 251.35,803.63" stroke="#687185" stroke-width="3.6" fill="none"/>
<path d="M196.05,803.63A39.80,39.80 0 0 1 223.70,735.20" stroke="url(#litg)" stroke-width="3.6" fill="none"/>
<path d="M223.70,733.40L223.70,742.40" stroke="#b9bdc9" stroke-width="3.2" fill="none"/>
<circle cx="223.7" cy="888.8" r="20" fill="#4a5163" filter="url(#sh2)"/>
<circle cx="223.7" cy="888.8" r="19" fill="none" stroke="#5a6274" stroke-width="1"/>
<circle cx="223.7" cy="888.8" r="15.4" fill="#8f79f6"/>
<path d="M221.80,882.64L221.80,894.96L212.80,888.80Z" fill="#2b2f3c"/>
<path d="M225.60,882.64L225.60,894.96L234.60,888.80Z" fill="#2b2f3c"/>
<path d="M196.05,999.63A39.80,39.80 0 1 1 251.35,999.63" stroke="#687185" stroke-width="3.6" fill="none"/>
<path d="M196.05,999.63A39.80,39.80 0 0 1 223.70,931.20" stroke="url(#litg)" stroke-width="3.6" fill="none"/>
<path d="M223.70,929.40L223.70,938.40" stroke="#b9bdc9" stroke-width="3.2" fill="none"/>
<circle cx="223.7" cy="1084.8" r="20" fill="#4a5163" filter="url(#sh2)"/>
<circle cx="223.7" cy="1084.8" r="19" fill="none" stroke="#5a6274" stroke-width="1"/>
<circle cx="223.7" cy="1084.8" r="15.4" fill="#8f79f6"/>
<path d="M221.80,1078.64L221.80,1090.96L212.80,1084.80Z" fill="#2b2f3c"/>
<path d="M225.60,1078.64L225.60,1090.96L234.60,1084.80Z" fill="#2b2f3c"/>
<path d="M196.05,1195.63A39.80,39.80 0 1 1 251.35,1195.63" stroke="#687185" stroke-width="3.6" fill="none"/>
<path d="M196.05,1195.63A39.80,39.80 0 0 1 223.70,1127.20" stroke="url(#litg)" stroke-width="3.6" fill="none"/>
<path d="M223.70,1125.40L223.70,1134.40" stroke="#b9bdc9" stroke-width="3.2" fill="none"/>
<circle cx="223.7" cy="1280.8" r="20" fill="#4a5163" filter="url(#sh2)"/>
<circle cx="223.7" cy="1280.8" r="19" fill="none" stroke="#5a6274" stroke-width="1"/>
<circle cx="223.7" cy="1280.8" r="15.4" fill="#8f79f6"/>
<path d="M221.80,1274.64L221.80,1286.96L212.80,1280.80Z" fill="#2b2f3c"/>
<path d="M225.60,1274.64L225.60,1286.96L234.60,1280.80Z" fill="#2b2f3c"/>
<path d="M196.05,1391.63A39.80,39.80 0 1 1 251.35,1391.63" stroke="#687185" stroke-width="3.6" fill="none"/>
<path d="M196.05,1391.63A39.80,39.80 0 0 1 223.70,1323.20" stroke="url(#litg)" stroke-width="3.6" fill="none"/>
<path d="M223.70,1321.40L223.70,1330.40" stroke="#b9bdc9" stroke-width="3.2" fill="none"/>
<path d="M199,1515.500 L214.600,1550.500 L232.800,1534.500 L239.300,1544 L246.800,1505 L222,1528.500 Z" fill="none" stroke="#6b788f" stroke-width="6" stroke-linejoin="miter" stroke-miterlimit="10"/>
<path d="M346.5,301 c3.500,-12.500 8.500,-12.500 13,0 s9.500,12.500 13,0" fill="none" stroke="#f1f2f6" stroke-width="2.6" stroke-linecap="round"/>
<path d="M404,300 v-11 h13.500 v23.500 h14 v-11" fill="none" stroke="#f1f2f6" stroke-width="2.600"/>
<circle cx="777.5" cy="296.5" r="5" fill="#5c677c"/>
<circle cx="765.5" cy="309.5" r="3.2" fill="#5c677c"/>
<circle cx="767.5" cy="289.5" r="1.6" fill="#5c677c"/>
<circle cx="766.0" cy="298.5" r="1.8" fill="#5c677c"/>
<circle cx="788.5" cy="290.5" r="2" fill="#5c677c"/>
<circle cx="790.0" cy="309.5" r="2.2" fill="#5c677c"/>
<circle cx="776.5" cy="306.5" r="2" fill="#5c677c"/>
<circle cx="783.5" cy="309.5" r="1.2" fill="#5c677c"/>
<circle cx="788.5" cy="301" r="1" fill="#5c677c"/>
<circle cx="1191.5" cy="297.6" r="5" fill="#6f7a90"/><circle cx="1191.5" cy="297.6" r="9.6" fill="none" stroke="#6f7a90" stroke-width="2"/><path d="M1184.25,310.16A14.50,14.50 0 0 1 1184.25,285.04" fill="none" stroke="#6f7a90" stroke-width="1.600"/><path d="M1198.75,285.04A14.50,14.50 0 0 1 1198.75,310.16" fill="none" stroke="#6f7a90" stroke-width="1.600"/>
<path d="M1239,287.5 V308.5" stroke="#6f7a90" stroke-width="2.600" stroke-linecap="round"/>
<path d="M1245.6,292.0 V304.0" stroke="#6f7a90" stroke-width="2.600" stroke-linecap="round"/>
<path d="M1251.8,294.5 V301.5" stroke="#6f7a90" stroke-width="2.600" stroke-linecap="round"/>
<path d="M1257.6,293.0 V303.0" stroke="#6f7a90" stroke-width="2.600" stroke-linecap="round"/>
<path d="M1263.6,296.5 V299.5" stroke="#6f7a90" stroke-width="2.600" stroke-linecap="round"/>
<path d="M1745.500,290.500 h11 l11.800,18 h11.200 M1751.200,290.500 l11.800,18" fill="none" stroke="#f1f2f6" stroke-width="2.400" stroke-linejoin="round"/>
<path d="M2043.500,303.500 h8.500 l3.500,-6 l4.500,13.500 l4.500,-21.500 l4,18.500 l3.500,-8 l2.500,3.500 h6" fill="none" stroke="#6f7a90" stroke-width="2" stroke-linejoin="round"/>
<path d="M346,797 L364,817 V1157 H346 Z" fill="#2a2e38"/>
<path d="M1022,797 L1004,817 V1157 H1022 Z" fill="#2a2e38"/>
<path d="M346,797 L364,817 V1157" fill="none" stroke="#262931" stroke-width="1.500"/>
<path d="M1022,797 L1004,817 V1157" fill="none" stroke="#262931" stroke-width="1.500"/>
<circle cx="368" cy="370" r="8.800" fill="none" stroke="#8f79f6" stroke-width="2.200"/><path d="M368,365 v10" stroke="#8f79f6" stroke-width="2.400"/>
<path d="M532.5,359.5L521.5,370.0L532.5,380.5" stroke="#7a8398" stroke-width="2.2" fill="none" stroke-linejoin="miter"/>
<path d="M835.5,359.5L846.5,370.0L835.5,380.5" stroke="#7a8398" stroke-width="2.2" fill="none" stroke-linejoin="miter"/>
<path d="M978.5,370 c3.500,-11 8.500,-11 13,1.500 s9.500,12.500 13.500,0" fill="none" stroke="#8f79f6" stroke-width="2.800" stroke-linecap="round"/>
<path d="M357.9,532.4C360.2,532.2 367.4,531.2 372.0,531.2C376.5,531.3 380.7,531.2 385.1,532.7C389.5,534.2 394.4,537.1 398.3,540.0C402.2,542.9 404.9,546.5 408.5,550.3C412.2,554.0 417.2,560.5 420.2,562.5C423.3,564.6 424.2,560.6 426.7,562.5C429.1,564.5 432.8,574.6 434.9,574.3C437.0,573.9 437.9,566.5 439.3,560.5C440.6,554.5 441.9,542.3 443.1,538.5C444.3,534.8 445.0,534.3 446.6,538.0C448.2,541.6 450.4,555.8 452.4,560.5C454.5,565.2 456.4,562.2 458.9,566.4C461.3,570.5 463.5,578.8 467.1,585.4C470.6,592.0 476.4,601.6 480.3,605.9C484.2,610.1 487.3,609.8 490.5,610.8C493.7,611.9 496.4,611.2 499.3,612.0C502.2,612.8 505.6,615.1 508.1,615.5C510.5,615.9 511.7,614.0 513.9,614.4C516.1,614.7 519.0,617.6 521.2,617.9C523.4,618.2 524.9,615.9 527.1,616.1C529.3,616.3 532.0,619.1 534.4,619.0C536.8,618.9 539.3,615.3 541.7,615.5C544.2,615.7 547.0,621.1 549.0,620.2C551.1,619.3 552.5,613.0 554.0,610.3C555.6,607.5 557.0,603.9 558.4,603.8C559.8,603.7 560.8,607.5 562.2,609.7C563.6,611.8 564.7,616.1 566.6,616.7C568.6,617.3 571.5,613.3 573.9,613.2C576.4,613.1 579.0,615.6 581.2,616.1C583.4,616.6 585.1,615.8 587.1,616.1C589.0,616.5 590.5,618.0 592.9,618.2C595.4,618.3 598.3,617.0 601.7,617.0C605.1,616.9 609.0,617.9 613.4,617.9C617.8,617.9 623.2,617.3 628.1,617.0C632.9,616.7 638.3,616.7 642.7,616.1C647.1,615.5 651.0,613.9 654.4,613.2C657.8,612.5 660.3,612.7 663.2,611.7C666.1,610.7 669.0,609.3 672.0,607.3C674.9,605.4 677.8,602.5 680.8,600.0C683.7,597.6 686.1,596.4 689.5,592.7C693.0,589.0 697.3,583.9 701.2,578.1C705.1,572.2 709.5,563.7 713.0,557.6C716.4,551.5 719.3,545.5 721.7,541.5C724.2,537.5 725.6,537.2 727.6,533.6C729.5,529.9 731.9,522.7 733.4,519.5C735.0,516.3 735.5,515.1 737.0,514.3C738.4,513.4 740.8,516.8 742.2,514.3C743.7,511.7 744.7,506.0 745.7,499.0C746.8,492.1 747.7,481.0 748.7,472.7C749.6,464.4 750.7,455.1 751.6,449.3C752.5,443.4 753.2,440.0 753.9,437.6C754.7,435.1 755.3,434.5 756.0,434.6C756.7,434.7 757.2,436.4 758.3,438.1C759.4,439.9 761.0,444.7 762.7,445.2C764.4,445.7 766.4,441.0 768.6,441.1C770.8,441.2 773.7,445.5 775.9,445.8C778.1,446.1 779.5,442.8 781.7,442.8C783.9,442.8 786.6,445.6 789.1,445.8C791.5,446.0 793.9,444.0 796.4,444.0C798.8,444.0 801.0,445.7 803.7,445.8C806.4,445.9 809.5,444.6 812.5,444.6C815.4,444.6 818.3,445.8 821.3,445.8C824.2,445.8 827.4,444.6 830.0,444.6C832.7,444.6 834.9,445.2 837.4,445.8C839.8,446.3 842.5,447.5 844.7,448.1C846.9,448.7 848.8,448.1 850.5,449.3C852.2,450.4 853.4,452.9 854.9,455.1C856.5,457.3 858.4,462.2 859.9,462.4C861.4,462.7 862.3,458.9 863.7,456.6C865.1,454.2 866.6,449.9 868.1,448.4C869.6,446.9 870.5,447.1 872.5,447.8C874.4,448.5 877.6,451.7 879.8,452.8C882.0,453.9 882.7,452.9 885.7,454.5C888.6,456.1 893.0,459.2 897.4,462.4C901.8,465.7 906.6,469.5 912.0,474.2C917.4,478.8 923.7,484.9 929.6,490.2C935.4,495.6 941.3,501.2 947.1,506.3C953.0,511.5 960.0,517.5 964.7,521.0C969.3,524.4 971.8,526.3 974.9,527.1C978.1,528.0 980.5,525.4 983.7,526.0C986.9,526.5 989.6,529.5 994.0,530.6C998.3,531.8 1007.4,532.6 1010.1,533.0 L1010.1,539.5 L357.9,539.5 Z" fill="url(#wfA)"/>
<path d="M357.9,532.4C360.2,532.2 367.4,531.2 372.0,531.2C376.5,531.3 380.7,531.2 385.1,532.7C389.5,534.2 394.4,537.1 398.3,540.0C402.2,542.9 404.9,546.5 408.5,550.3C412.2,554.0 417.2,560.5 420.2,562.5C423.3,564.6 424.2,560.6 426.7,562.5C429.1,564.5 432.8,574.6 434.9,574.3C437.0,573.9 437.9,566.5 439.3,560.5C440.6,554.5 441.9,542.3 443.1,538.5C444.3,534.8 445.0,534.3 446.6,538.0C448.2,541.6 450.4,555.8 452.4,560.5C454.5,565.2 456.4,562.2 458.9,566.4C461.3,570.5 463.5,578.8 467.1,585.4C470.6,592.0 476.4,601.6 480.3,605.9C484.2,610.1 487.3,609.8 490.5,610.8C493.7,611.9 496.4,611.2 499.3,612.0C502.2,612.8 505.6,615.1 508.1,615.5C510.5,615.9 511.7,614.0 513.9,614.4C516.1,614.7 519.0,617.6 521.2,617.9C523.4,618.2 524.9,615.9 527.1,616.1C529.3,616.3 532.0,619.1 534.4,619.0C536.8,618.9 539.3,615.3 541.7,615.5C544.2,615.7 547.0,621.1 549.0,620.2C551.1,619.3 552.5,613.0 554.0,610.3C555.6,607.5 557.0,603.9 558.4,603.8C559.8,603.7 560.8,607.5 562.2,609.7C563.6,611.8 564.7,616.1 566.6,616.7C568.6,617.3 571.5,613.3 573.9,613.2C576.4,613.1 579.0,615.6 581.2,616.1C583.4,616.6 585.1,615.8 587.1,616.1C589.0,616.5 590.5,618.0 592.9,618.2C595.4,618.3 598.3,617.0 601.7,617.0C605.1,616.9 609.0,617.9 613.4,617.9C617.8,617.9 623.2,617.3 628.1,617.0C632.9,616.7 638.3,616.7 642.7,616.1C647.1,615.5 651.0,613.9 654.4,613.2C657.8,612.5 660.3,612.7 663.2,611.7C666.1,610.7 669.0,609.3 672.0,607.3C674.9,605.4 677.8,602.5 680.8,600.0C683.7,597.6 686.1,596.4 689.5,592.7C693.0,589.0 697.3,583.9 701.2,578.1C705.1,572.2 709.5,563.7 713.0,557.6C716.4,551.5 719.3,545.5 721.7,541.5C724.2,537.5 725.6,537.2 727.6,533.6C729.5,529.9 731.9,522.7 733.4,519.5C735.0,516.3 735.5,515.1 737.0,514.3C738.4,513.4 740.8,516.8 742.2,514.3C743.7,511.7 744.7,506.0 745.7,499.0C746.8,492.1 747.7,481.0 748.7,472.7C749.6,464.4 750.7,455.1 751.6,449.3C752.5,443.4 753.2,440.0 753.9,437.6C754.7,435.1 755.3,434.5 756.0,434.6C756.7,434.7 757.2,436.4 758.3,438.1C759.4,439.9 761.0,444.7 762.7,445.2C764.4,445.7 766.4,441.0 768.6,441.1C770.8,441.2 773.7,445.5 775.9,445.8C778.1,446.1 779.5,442.8 781.7,442.8C783.9,442.8 786.6,445.6 789.1,445.8C791.5,446.0 793.9,444.0 796.4,444.0C798.8,444.0 801.0,445.7 803.7,445.8C806.4,445.9 809.5,444.6 812.5,444.6C815.4,444.6 818.3,445.8 821.3,445.8C824.2,445.8 827.4,444.6 830.0,444.6C832.7,444.6 834.9,445.2 837.4,445.8C839.8,446.3 842.5,447.5 844.7,448.1C846.9,448.7 848.8,448.1 850.5,449.3C852.2,450.4 853.4,452.9 854.9,455.1C856.5,457.3 858.4,462.2 859.9,462.4C861.4,462.7 862.3,458.9 863.7,456.6C865.1,454.2 866.6,449.9 868.1,448.4C869.6,446.9 870.5,447.1 872.5,447.8C874.4,448.5 877.6,451.7 879.8,452.8C882.0,453.9 882.7,452.9 885.7,454.5C888.6,456.1 893.0,459.2 897.4,462.4C901.8,465.7 906.6,469.5 912.0,474.2C917.4,478.8 923.7,484.9 929.6,490.2C935.4,495.6 941.3,501.2 947.1,506.3C953.0,511.5 960.0,517.5 964.7,521.0C969.3,524.4 971.8,526.3 974.9,527.1C978.1,528.0 980.5,525.4 983.7,526.0C986.9,526.5 989.6,529.5 994.0,530.6C998.3,531.8 1007.4,532.6 1010.1,533.0" fill="none" stroke="#9581f8" stroke-width="2.050" stroke-linejoin="round"/>
<circle cx="432.4" cy="717.4" r="2.4" fill="#2a2e39"/>
<circle cx="441.9" cy="717.4" r="2.4" fill="#2a2e39"/>
<circle cx="432.4" cy="726.9" r="2.4" fill="#2a2e39"/>
<circle cx="441.9" cy="726.9" r="2.4" fill="#2a2e39"/>
<circle cx="432.4" cy="736.5" r="2.4" fill="#2a2e39"/>
<circle cx="441.9" cy="736.5" r="2.4" fill="#2a2e39"/>
<circle cx="432.4" cy="746.0" r="2.4" fill="#2a2e39"/>
<circle cx="441.9" cy="746.0" r="2.4" fill="#2a2e39"/>
<circle cx="432.4" cy="755.6" r="2.4" fill="#2a2e39"/>
<circle cx="441.9" cy="755.6" r="2.4" fill="#2a2e39"/>
<circle cx="432.4" cy="765.1" r="2.4" fill="#2a2e39"/>
<circle cx="441.9" cy="765.1" r="2.4" fill="#2a2e39"/>
<circle cx="432.4" cy="774.7" r="2.4" fill="#2a2e39"/>
<circle cx="441.9" cy="774.7" r="2.4" fill="#2a2e39"/>
<circle cx="930.3" cy="717.4" r="2.4" fill="#2a2e39"/>
<circle cx="939.8" cy="717.4" r="2.4" fill="#2a2e39"/>
<circle cx="930.3" cy="726.9" r="2.4" fill="#2a2e39"/>
<circle cx="939.8" cy="726.9" r="2.4" fill="#2a2e39"/>
<circle cx="930.3" cy="736.5" r="2.4" fill="#2a2e39"/>
<circle cx="939.8" cy="736.5" r="2.4" fill="#2a2e39"/>
<circle cx="930.3" cy="746.0" r="2.4" fill="#2a2e39"/>
<circle cx="939.8" cy="746.0" r="2.4" fill="#2a2e39"/>
<circle cx="930.3" cy="755.6" r="2.4" fill="#2a2e39"/>
<circle cx="939.8" cy="755.6" r="2.4" fill="#2a2e39"/>
<circle cx="930.3" cy="765.1" r="2.4" fill="#2a2e39"/>
<circle cx="939.8" cy="765.1" r="2.4" fill="#2a2e39"/>
<circle cx="930.3" cy="774.7" r="2.4" fill="#2a2e39"/>
<circle cx="939.8" cy="774.7" r="2.4" fill="#2a2e39"/>
<path d="M500.25,769.63A39.80,39.80 0 1 1 555.55,769.63" stroke="#687185" stroke-width="3.6" fill="none"/>
<path d="M500.25,769.63A39.80,39.80 0 0 1 521.67,701.69" stroke="url(#litg)" stroke-width="3.6" fill="none"/>
<path d="M521.39,699.91L522.80,708.80" stroke="#b9bdc9" stroke-width="3.2" fill="none"/>
<path d="M810.35,769.63A39.80,39.80 0 1 1 865.65,769.63" stroke="#687185" stroke-width="3.6" fill="none"/>
<path d="M810.35,769.63A39.80,39.80 0 1 1 874.64,725.45" stroke="url(#litg)" stroke-width="3.6" fill="none"/>
<path d="M876.29,724.75L868.01,728.26" stroke="#b9bdc9" stroke-width="3.2" fill="none"/>
<path d="M426.4,865.0L418.4,872.0L426.4,879.0" stroke="#7a8398" stroke-width="2" fill="none" stroke-linejoin="miter"/>
<path d="M538.0,865.0L546.0,872.0L538.0,879.0" stroke="#7a8398" stroke-width="2" fill="none" stroke-linejoin="miter"/>
<path d="M832.0,865.0L824.0,872.0L832.0,879.0" stroke="#7a8398" stroke-width="2" fill="none" stroke-linejoin="miter"/>
<path d="M943.6,865.0L951.6,872.0L943.6,879.0" stroke="#7a8398" stroke-width="2" fill="none" stroke-linejoin="miter"/>
<path d="M454.35,978.63A39.80,39.80 0 1 1 509.65,978.63" stroke="#687185" stroke-width="3.6" fill="none"/>
<path d="M454.35,978.63A39.80,39.80 0 0 1 482.00,910.20" stroke="url(#litg)" stroke-width="3.6" fill="none"/>
<path d="M482.00,908.40L482.00,917.40" stroke="#b9bdc9" stroke-width="3.2" fill="none"/>
<path d="M860.35,978.63A39.80,39.80 0 1 1 915.65,978.63" stroke="#687185" stroke-width="3.6" fill="none"/>
<path d="M860.35,978.63A39.80,39.80 0 0 1 888.00,910.20" stroke="url(#litg)" stroke-width="3.6" fill="none"/>
<path d="M888.00,908.40L888.00,917.40" stroke="#b9bdc9" stroke-width="3.2" fill="none"/>
<path d="M648.01,942.63A54.40,54.40 0 1 1 723.59,942.63" stroke="#687185" stroke-width="3.6" fill="none"/>
<path d="M648.01,942.63A54.40,54.40 0 0 1 685.80,849.10" stroke="url(#litg)" stroke-width="3.6" fill="none"/>
<path d="M685.80,847.30L685.80,861.00" stroke="#b9bdc9" stroke-width="3.2" fill="none"/>
<circle cx="687.57" cy="869.65" r="2.500" fill="#2a2e38"/>
<circle cx="716.01" cy="888.11" r="2.500" fill="#2a2e38"/>
<circle cx="714.23" cy="921.96" r="2.500" fill="#2a2e38"/>
<circle cx="684.03" cy="937.35" r="2.500" fill="#2a2e38"/>
<circle cx="655.59" cy="918.89" r="2.500" fill="#2a2e38"/>
<circle cx="657.37" cy="885.04" r="2.500" fill="#2a2e38"/>
<path d="M430.35,1109.13A39.80,39.80 0 1 1 485.65,1109.13" stroke="#687185" stroke-width="3.6" fill="none"/>
<path d="M430.35,1109.13A39.80,39.80 0 0 1 458.00,1040.70" stroke="url(#litg)" stroke-width="3.6" fill="none"/>
<path d="M458.00,1038.90L458.00,1047.90" stroke="#b9bdc9" stroke-width="3.2" fill="none"/>
<path d="M582.35,1109.13A39.80,39.80 0 1 1 637.65,1109.13" stroke="#687185" stroke-width="3.6" fill="none"/>
<path d="M582.35,1109.13A39.80,39.80 0 0 1 610.00,1040.70" stroke="url(#litg)" stroke-width="3.6" fill="none"/>
<path d="M610.00,1038.90L610.00,1047.90" stroke="#b9bdc9" stroke-width="3.2" fill="none"/>
<path d="M730.15,1109.13A39.80,39.80 0 1 1 785.45,1109.13" stroke="#687185" stroke-width="3.6" fill="none"/>
<path d="M730.15,1109.13A39.80,39.80 0 0 1 757.80,1040.70" stroke="url(#litg)" stroke-width="3.6" fill="none"/>
<path d="M757.80,1038.90L757.80,1047.90" stroke="#b9bdc9" stroke-width="3.2" fill="none"/>
<path d="M882.05,1109.13A39.80,39.80 0 1 1 937.35,1109.13" stroke="#687185" stroke-width="3.6" fill="none"/>
<path d="M882.05,1109.13A39.80,39.80 0 1 1 949.20,1075.65" stroke="url(#litg)" stroke-width="3.6" fill="none"/>
<path d="M950.99,1075.43L942.06,1076.53" stroke="#b9bdc9" stroke-width="3.2" fill="none"/>
<path d="M1040,797 L1058,817 V1157 H1040 Z" fill="#2a2e38"/>
<path d="M1716,797 L1698,817 V1157 H1716 Z" fill="#2a2e38"/>
<path d="M1040,797 L1058,817 V1157" fill="none" stroke="#262931" stroke-width="1.500"/>
<path d="M1716,797 L1698,817 V1157" fill="none" stroke="#262931" stroke-width="1.500"/>
<circle cx="1062" cy="370" r="8.800" fill="none" stroke="#8f79f6" stroke-width="2.200"/><path d="M1062,365 v10" stroke="#8f79f6" stroke-width="2.400"/>
<path d="M1226.5,359.5L1215.5,370.0L1226.5,380.5" stroke="#7a8398" stroke-width="2.2" fill="none" stroke-linejoin="miter"/>
<path d="M1529.5,359.5L1540.5,370.0L1529.5,380.5" stroke="#7a8398" stroke-width="2.2" fill="none" stroke-linejoin="miter"/>
<path d="M1671.7,371.700 v-9.200 h14.600 v18 h14 v-10" fill="none" stroke="#8f79f6" stroke-width="2.600"/>
<path d="M1051.9,538.8C1052.9,539.1 1055.8,540.4 1057.8,540.3C1059.8,540.2 1061.8,538.2 1063.8,538.2C1065.7,538.2 1067.7,540.1 1069.7,540.3C1071.7,540.5 1073.4,539.1 1075.7,539.4C1077.9,539.8 1080.6,542.3 1083.1,542.4C1085.6,542.5 1088.0,540.3 1090.5,540.3C1093.0,540.3 1095.7,542.2 1097.9,542.4C1100.2,542.6 1101.6,542.4 1103.9,541.8C1106.1,541.2 1109.0,538.4 1111.3,538.8C1113.6,539.2 1115.4,544.9 1117.8,544.2C1120.3,543.4 1123.7,535.3 1126.2,534.4C1128.6,533.5 1130.5,539.3 1132.7,538.8C1134.9,538.3 1137.2,532.0 1139.5,531.4C1141.8,530.8 1143.9,535.8 1146.4,535.3C1148.8,534.8 1151.9,528.9 1154.4,528.4C1156.9,527.9 1159.0,532.2 1161.2,532.3C1163.4,532.4 1165.4,528.1 1167.7,529.3C1170.1,530.5 1172.5,539.4 1175.2,539.4C1177.9,539.4 1181.4,529.5 1184.1,529.3C1186.8,529.1 1189.0,535.4 1191.5,538.2C1194.0,541.1 1196.2,547.2 1198.9,546.3C1201.7,545.4 1205.6,533.1 1207.9,532.9C1210.1,532.6 1210.7,540.3 1212.3,544.8C1213.9,549.2 1215.6,558.6 1217.7,559.6C1219.7,560.6 1222.5,551.0 1224.8,550.7C1227.1,550.5 1229.5,557.1 1231.6,558.1C1233.8,559.2 1235.2,554.5 1237.6,557.3C1239.9,560.0 1243.0,573.2 1245.6,574.5C1248.2,575.8 1250.9,564.5 1253.3,565.0C1255.7,565.5 1257.7,573.3 1259.8,577.5C1262.0,581.6 1263.7,589.4 1266.4,589.9C1269.1,590.4 1273.1,578.4 1276.2,580.4C1279.3,582.4 1282.3,600.0 1285.1,601.8C1287.9,603.7 1290.4,589.4 1293.1,591.4C1295.8,593.4 1298.8,611.1 1301.4,613.7C1304.1,616.3 1306.4,607.5 1308.9,607.2C1311.3,606.8 1313.6,611.0 1316.3,611.6C1319.0,612.3 1322.5,610.9 1325.2,611.0C1327.9,611.2 1330.2,610.6 1332.6,612.5C1335.1,614.4 1337.6,621.6 1340.1,622.6C1342.5,623.6 1345.0,616.9 1347.5,618.5C1350.0,620.0 1352.2,633.2 1354.9,631.8C1357.6,630.4 1361.4,614.1 1363.8,610.1C1366.3,606.1 1367.8,610.7 1369.8,607.8C1371.7,604.8 1373.8,598.8 1375.7,592.3C1377.6,585.8 1379.6,577.5 1381.1,568.5C1382.5,559.6 1383.5,549.7 1384.6,538.8C1385.7,527.9 1386.6,514.6 1387.6,503.2C1388.6,491.8 1389.6,478.7 1390.6,470.5C1391.6,462.3 1392.5,457.5 1393.5,454.2C1394.5,450.8 1395.3,450.5 1396.5,450.6C1397.7,450.7 1399.6,454.1 1401.0,455.1C1402.3,456.0 1403.1,454.7 1404.8,456.2C1406.6,457.8 1409.5,464.4 1411.4,464.6C1413.2,464.7 1414.3,459.5 1415.8,457.1C1417.3,454.8 1418.8,450.3 1420.3,450.3C1421.8,450.3 1423.2,454.8 1424.7,457.1C1426.2,459.5 1427.5,463.6 1429.2,464.6C1430.9,465.6 1433.1,461.8 1435.1,463.1C1437.1,464.3 1438.8,468.5 1441.1,472.0C1443.3,475.5 1446.3,480.7 1448.5,483.9C1450.7,487.1 1452.5,490.2 1454.4,491.3C1456.4,492.4 1458.2,490.1 1460.4,490.7C1462.6,491.4 1465.5,495.1 1467.8,495.2C1470.1,495.3 1472.4,490.0 1474.3,491.3C1476.3,492.6 1478.1,500.0 1479.7,503.2C1481.3,506.4 1482.4,509.6 1484.1,510.6C1485.9,511.6 1487.9,508.1 1490.1,509.1C1492.3,510.1 1494.7,514.0 1497.5,516.6C1500.3,519.1 1504.5,524.3 1507.0,524.6C1509.5,524.8 1510.6,520.1 1512.4,518.0C1514.2,516.0 1516.0,511.8 1517.7,512.1C1519.5,512.3 1520.9,516.8 1522.8,519.5C1524.6,522.2 1526.9,526.5 1528.7,528.4C1530.5,530.4 1532.0,531.9 1533.8,531.4C1535.5,530.9 1537.5,527.3 1539.1,525.5C1540.7,523.6 1542.2,519.4 1543.6,520.1C1545.0,520.9 1546.0,526.9 1547.4,529.9C1548.8,532.9 1550.3,539.0 1551.9,538.2C1553.5,537.5 1555.3,529.3 1556.9,525.5C1558.6,521.6 1560.3,515.3 1562.0,515.1C1563.7,514.8 1565.2,520.8 1567.3,524.0C1569.5,527.2 1572.0,534.4 1574.8,534.4C1577.5,534.4 1580.7,523.6 1583.7,524.0C1586.6,524.3 1589.7,536.1 1592.6,536.5C1595.5,536.8 1598.3,526.9 1600.9,526.1C1603.5,525.2 1605.7,530.9 1608.0,531.4C1610.4,532.0 1612.2,528.9 1614.9,529.3C1617.5,529.7 1621.3,533.1 1623.8,533.8C1626.3,534.5 1627.7,533.0 1629.7,533.5C1631.7,533.9 1633.4,536.6 1635.7,536.5C1637.9,536.4 1640.9,533.0 1643.1,532.9C1645.3,532.8 1646.8,535.8 1649.0,535.9C1651.3,536.0 1654.1,533.2 1656.5,533.5C1658.8,533.7 1661.1,537.0 1663.3,537.3C1665.5,537.7 1667.5,535.6 1669.8,535.9C1672.2,536.1 1674.8,538.6 1677.3,538.8C1679.7,539.1 1682.5,537.3 1684.7,537.3C1686.9,537.4 1688.5,539.4 1690.6,539.4C1692.7,539.5 1694.8,537.5 1697.2,537.6C1699.5,537.8 1703.3,539.9 1704.6,540.3 L1704.6,539.5 L1051.9,539.5 Z" fill="url(#wfA)"/>
<path d="M1051.9,538.8C1052.9,539.1 1055.8,540.4 1057.8,540.3C1059.8,540.2 1061.8,538.2 1063.8,538.2C1065.7,538.2 1067.7,540.1 1069.7,540.3C1071.7,540.5 1073.4,539.1 1075.7,539.4C1077.9,539.8 1080.6,542.3 1083.1,542.4C1085.6,542.5 1088.0,540.3 1090.5,540.3C1093.0,540.3 1095.7,542.2 1097.9,542.4C1100.2,542.6 1101.6,542.4 1103.9,541.8C1106.1,541.2 1109.0,538.4 1111.3,538.8C1113.6,539.2 1115.4,544.9 1117.8,544.2C1120.3,543.4 1123.7,535.3 1126.2,534.4C1128.6,533.5 1130.5,539.3 1132.7,538.8C1134.9,538.3 1137.2,532.0 1139.5,531.4C1141.8,530.8 1143.9,535.8 1146.4,535.3C1148.8,534.8 1151.9,528.9 1154.4,528.4C1156.9,527.9 1159.0,532.2 1161.2,532.3C1163.4,532.4 1165.4,528.1 1167.7,529.3C1170.1,530.5 1172.5,539.4 1175.2,539.4C1177.9,539.4 1181.4,529.5 1184.1,529.3C1186.8,529.1 1189.0,535.4 1191.5,538.2C1194.0,541.1 1196.2,547.2 1198.9,546.3C1201.7,545.4 1205.6,533.1 1207.9,532.9C1210.1,532.6 1210.7,540.3 1212.3,544.8C1213.9,549.2 1215.6,558.6 1217.7,559.6C1219.7,560.6 1222.5,551.0 1224.8,550.7C1227.1,550.5 1229.5,557.1 1231.6,558.1C1233.8,559.2 1235.2,554.5 1237.6,557.3C1239.9,560.0 1243.0,573.2 1245.6,574.5C1248.2,575.8 1250.9,564.5 1253.3,565.0C1255.7,565.5 1257.7,573.3 1259.8,577.5C1262.0,581.6 1263.7,589.4 1266.4,589.9C1269.1,590.4 1273.1,578.4 1276.2,580.4C1279.3,582.4 1282.3,600.0 1285.1,601.8C1287.9,603.7 1290.4,589.4 1293.1,591.4C1295.8,593.4 1298.8,611.1 1301.4,613.7C1304.1,616.3 1306.4,607.5 1308.9,607.2C1311.3,606.8 1313.6,611.0 1316.3,611.6C1319.0,612.3 1322.5,610.9 1325.2,611.0C1327.9,611.2 1330.2,610.6 1332.6,612.5C1335.1,614.4 1337.6,621.6 1340.1,622.6C1342.5,623.6 1345.0,616.9 1347.5,618.5C1350.0,620.0 1352.2,633.2 1354.9,631.8C1357.6,630.4 1361.4,614.1 1363.8,610.1C1366.3,606.1 1367.8,610.7 1369.8,607.8C1371.7,604.8 1373.8,598.8 1375.7,592.3C1377.6,585.8 1379.6,577.5 1381.1,568.5C1382.5,559.6 1383.5,549.7 1384.6,538.8C1385.7,527.9 1386.6,514.6 1387.6,503.2C1388.6,491.8 1389.6,478.7 1390.6,470.5C1391.6,462.3 1392.5,457.5 1393.5,454.2C1394.5,450.8 1395.3,450.5 1396.5,450.6C1397.7,450.7 1399.6,454.1 1401.0,455.1C1402.3,456.0 1403.1,454.7 1404.8,456.2C1406.6,457.8 1409.5,464.4 1411.4,464.6C1413.2,464.7 1414.3,459.5 1415.8,457.1C1417.3,454.8 1418.8,450.3 1420.3,450.3C1421.8,450.3 1423.2,454.8 1424.7,457.1C1426.2,459.5 1427.5,463.6 1429.2,464.6C1430.9,465.6 1433.1,461.8 1435.1,463.1C1437.1,464.3 1438.8,468.5 1441.1,472.0C1443.3,475.5 1446.3,480.7 1448.5,483.9C1450.7,487.1 1452.5,490.2 1454.4,491.3C1456.4,492.4 1458.2,490.1 1460.4,490.7C1462.6,491.4 1465.5,495.1 1467.8,495.2C1470.1,495.3 1472.4,490.0 1474.3,491.3C1476.3,492.6 1478.1,500.0 1479.7,503.2C1481.3,506.4 1482.4,509.6 1484.1,510.6C1485.9,511.6 1487.9,508.1 1490.1,509.1C1492.3,510.1 1494.7,514.0 1497.5,516.6C1500.3,519.1 1504.5,524.3 1507.0,524.6C1509.5,524.8 1510.6,520.1 1512.4,518.0C1514.2,516.0 1516.0,511.8 1517.7,512.1C1519.5,512.3 1520.9,516.8 1522.8,519.5C1524.6,522.2 1526.9,526.5 1528.7,528.4C1530.5,530.4 1532.0,531.9 1533.8,531.4C1535.5,530.9 1537.5,527.3 1539.1,525.5C1540.7,523.6 1542.2,519.4 1543.6,520.1C1545.0,520.9 1546.0,526.9 1547.4,529.9C1548.8,532.9 1550.3,539.0 1551.9,538.2C1553.5,537.5 1555.3,529.3 1556.9,525.5C1558.6,521.6 1560.3,515.3 1562.0,515.1C1563.7,514.8 1565.2,520.8 1567.3,524.0C1569.5,527.2 1572.0,534.4 1574.8,534.4C1577.5,534.4 1580.7,523.6 1583.7,524.0C1586.6,524.3 1589.7,536.1 1592.6,536.5C1595.5,536.8 1598.3,526.9 1600.9,526.1C1603.5,525.2 1605.7,530.9 1608.0,531.4C1610.4,532.0 1612.2,528.9 1614.9,529.3C1617.5,529.7 1621.3,533.1 1623.8,533.8C1626.3,534.5 1627.7,533.0 1629.7,533.5C1631.7,533.9 1633.4,536.6 1635.7,536.5C1637.9,536.4 1640.9,533.0 1643.1,532.9C1645.3,532.8 1646.8,535.8 1649.0,535.9C1651.3,536.0 1654.1,533.2 1656.5,533.5C1658.8,533.7 1661.1,537.0 1663.3,537.3C1665.5,537.7 1667.5,535.6 1669.8,535.9C1672.2,536.1 1674.8,538.6 1677.3,538.8C1679.7,539.1 1682.5,537.3 1684.7,537.3C1686.9,537.4 1688.5,539.4 1690.6,539.4C1692.7,539.5 1694.8,537.5 1697.2,537.6C1699.5,537.8 1703.3,539.9 1704.6,540.3" fill="none" stroke="#9581f8" stroke-width="2.050" stroke-linejoin="round"/>
<circle cx="1126.4" cy="717.4" r="2.4" fill="#2a2e39"/>
<circle cx="1135.9" cy="717.4" r="2.4" fill="#2a2e39"/>
<circle cx="1126.4" cy="726.9" r="2.4" fill="#2a2e39"/>
<circle cx="1135.9" cy="726.9" r="2.4" fill="#2a2e39"/>
<circle cx="1126.4" cy="736.5" r="2.4" fill="#2a2e39"/>
<circle cx="1135.9" cy="736.5" r="2.4" fill="#2a2e39"/>
<circle cx="1126.4" cy="746.0" r="2.4" fill="#2a2e39"/>
<circle cx="1135.9" cy="746.0" r="2.4" fill="#2a2e39"/>
<circle cx="1126.4" cy="755.6" r="2.4" fill="#2a2e39"/>
<circle cx="1135.9" cy="755.6" r="2.4" fill="#2a2e39"/>
<circle cx="1126.4" cy="765.1" r="2.4" fill="#2a2e39"/>
<circle cx="1135.9" cy="765.1" r="2.4" fill="#2a2e39"/>
<circle cx="1126.4" cy="774.7" r="2.4" fill="#2a2e39"/>
<circle cx="1135.9" cy="774.7" r="2.4" fill="#2a2e39"/>
<circle cx="1624.3" cy="717.4" r="2.4" fill="#2a2e39"/>
<circle cx="1633.8" cy="717.4" r="2.4" fill="#2a2e39"/>
<circle cx="1624.3" cy="726.9" r="2.4" fill="#2a2e39"/>
<circle cx="1633.8" cy="726.9" r="2.4" fill="#2a2e39"/>
<circle cx="1624.3" cy="736.5" r="2.4" fill="#2a2e39"/>
<circle cx="1633.8" cy="736.5" r="2.4" fill="#2a2e39"/>
<circle cx="1624.3" cy="746.0" r="2.4" fill="#2a2e39"/>
<circle cx="1633.8" cy="746.0" r="2.4" fill="#2a2e39"/>
<circle cx="1624.3" cy="755.6" r="2.4" fill="#2a2e39"/>
<circle cx="1633.8" cy="755.6" r="2.4" fill="#2a2e39"/>
<circle cx="1624.3" cy="765.1" r="2.4" fill="#2a2e39"/>
<circle cx="1633.8" cy="765.1" r="2.4" fill="#2a2e39"/>
<circle cx="1624.3" cy="774.7" r="2.4" fill="#2a2e39"/>
<circle cx="1633.8" cy="774.7" r="2.4" fill="#2a2e39"/>
<path d="M1194.25,769.63A39.80,39.80 0 1 1 1249.55,769.63" stroke="#687185" stroke-width="3.6" fill="none"/>
<path d="M1194.25,769.63A39.80,39.80 0 0 1 1221.90,701.20" stroke="url(#litg)" stroke-width="3.6" fill="none"/>
<path d="M1221.90,699.40L1221.90,708.40" stroke="#b9bdc9" stroke-width="3.2" fill="none"/>
<path d="M1504.35,769.63A39.80,39.80 0 1 1 1559.65,769.63" stroke="#687185" stroke-width="3.6" fill="none"/>
<path d="M1504.35,769.63A39.80,39.80 0 1 1 1559.65,769.63" stroke="url(#litg)" stroke-width="3.6" fill="none"/>
<path d="M1560.90,770.92L1554.65,764.45" stroke="#b9bdc9" stroke-width="3.2" fill="none"/>
<path d="M1120.4,865.0L1112.4,872.0L1120.4,879.0" stroke="#7a8398" stroke-width="2" fill="none" stroke-linejoin="miter"/>
<path d="M1232.0,865.0L1240.0,872.0L1232.0,879.0" stroke="#7a8398" stroke-width="2" fill="none" stroke-linejoin="miter"/>
<path d="M1526.0,865.0L1518.0,872.0L1526.0,879.0" stroke="#7a8398" stroke-width="2" fill="none" stroke-linejoin="miter"/>
<path d="M1637.6,865.0L1645.6,872.0L1637.6,879.0" stroke="#7a8398" stroke-width="2" fill="none" stroke-linejoin="miter"/>
<path d="M1148.35,978.63A39.80,39.80 0 1 1 1203.65,978.63" stroke="#687185" stroke-width="3.6" fill="none"/>
<path d="M1148.35,978.63A39.80,39.80 0 0 1 1176.00,910.20" stroke="url(#litg)" stroke-width="3.6" fill="none"/>
<path d="M1176.00,908.40L1176.00,917.40" stroke="#b9bdc9" stroke-width="3.2" fill="none"/>
<path d="M1554.35,978.63A39.80,39.80 0 1 1 1609.65,978.63" stroke="#687185" stroke-width="3.6" fill="none"/>
<path d="M1554.35,978.63A39.80,39.80 0 0 1 1582.00,910.20" stroke="url(#litg)" stroke-width="3.6" fill="none"/>
<path d="M1582.00,908.40L1582.00,917.40" stroke="#b9bdc9" stroke-width="3.2" fill="none"/>
<path d="M1342.01,942.63A54.40,54.40 0 1 1 1417.59,942.63" stroke="#687185" stroke-width="3.6" fill="none"/>
<path d="M1340.76,943.93L1350.28,934.07" stroke="#b9bdc9" stroke-width="3.2" fill="none"/>
<circle cx="1381.57" cy="869.65" r="2.500" fill="#2a2e38"/>
<circle cx="1410.01" cy="888.11" r="2.500" fill="#2a2e38"/>
<circle cx="1408.23" cy="921.96" r="2.500" fill="#2a2e38"/>
<circle cx="1378.03" cy="937.35" r="2.500" fill="#2a2e38"/>
<circle cx="1349.59" cy="918.89" r="2.500" fill="#2a2e38"/>
<circle cx="1351.37" cy="885.04" r="2.500" fill="#2a2e38"/>
<path d="M1293.25,868.79A10.50,10.50 0 1 1 1303.75,868.79" fill="none" stroke="#675cec" stroke-width="9.200"/>
<path d="M1298.50,849.20A10.50,10.50 0 0 1 1305.92,852.28" fill="none" stroke="#907cff" stroke-width="9.200"/>
<path d="M1305.92,852.28A10.50,10.50 0 0 1 1307.31,853.98" fill="none" stroke="#a6adc0" stroke-width="9.200"/>
<path d="M1124.35,1109.13A39.80,39.80 0 1 1 1179.65,1109.13" stroke="#687185" stroke-width="3.6" fill="none"/>
<path d="M1124.35,1109.13A39.80,39.80 0 0 1 1152.00,1040.70" stroke="url(#litg)" stroke-width="3.6" fill="none"/>
<path d="M1152.00,1038.90L1152.00,1047.90" stroke="#b9bdc9" stroke-width="3.2" fill="none"/>
<path d="M1276.35,1109.13A39.80,39.80 0 1 1 1331.65,1109.13" stroke="#687185" stroke-width="3.6" fill="none"/>
<path d="M1276.35,1109.13A39.80,39.80 0 0 1 1304.00,1040.70" stroke="url(#litg)" stroke-width="3.6" fill="none"/>
<path d="M1304.00,1038.90L1304.00,1047.90" stroke="#b9bdc9" stroke-width="3.2" fill="none"/>
<path d="M1424.15,1109.13A39.80,39.80 0 1 1 1479.45,1109.13" stroke="#687185" stroke-width="3.6" fill="none"/>
<path d="M1424.15,1109.13A39.80,39.80 0 0 1 1451.80,1040.70" stroke="url(#litg)" stroke-width="3.6" fill="none"/>
<path d="M1451.80,1038.90L1451.80,1047.90" stroke="#b9bdc9" stroke-width="3.2" fill="none"/>
<path d="M1576.05,1109.13A39.80,39.80 0 1 1 1631.35,1109.13" stroke="#687185" stroke-width="3.6" fill="none"/>
<path d="M1576.05,1109.13A39.80,39.80 0 1 1 1643.20,1075.65" stroke="url(#litg)" stroke-width="3.6" fill="none"/>
<path d="M1644.99,1075.43L1636.06,1076.53" stroke="#b9bdc9" stroke-width="3.2" fill="none"/>
<circle cx="1756" cy="370" r="8.800" fill="none" stroke="#8f79f6" stroke-width="2.200"/><path d="M1756,365 v10" stroke="#8f79f6" stroke-width="2.400"/>
<path d="M1910.5,359.5L1899.5,370.0L1910.5,380.5" stroke="#7a8398" stroke-width="2.2" fill="none" stroke-linejoin="miter"/>
<path d="M2195.5,359.5L2206.5,370.0L2195.5,380.5" stroke="#7a8398" stroke-width="2.2" fill="none" stroke-linejoin="miter"/>
<path d="M2252.500,361 h11 l11.800,18 h10.700 M2258.200,361 l11.800,18" fill="none" stroke="#8f79f6" stroke-width="2.400" stroke-linejoin="round"/>
<g fill="none" stroke="#a3acc2" stroke-width="2"><rect x="1861" y="602" width="26.500" height="24.500" rx="2.500"/><path d="M1869.800,602 v24.500 M1878.600,602 v24.500"/></g><path d="M1869.800,603 v13 M1878.600,603 v13" stroke="#a3acc2" stroke-width="5.400"/>
<path d="M1788.35,681.13A39.80,39.80 0 1 1 1843.65,681.13" stroke="#687185" stroke-width="3.6" fill="none"/>
<path d="M1788.35,681.13A39.80,39.80 0 1 1 1851.14,633.82" stroke="url(#litg)" stroke-width="3.6" fill="none"/>
<path d="M1852.73,632.97L1844.78,637.20" stroke="#b9bdc9" stroke-width="3.2" fill="none"/>
<path d="M1942.35,681.13A39.80,39.80 0 1 1 1997.65,681.13" stroke="#687185" stroke-width="3.6" fill="none"/>
<path d="M1942.35,681.13A39.80,39.80 0 0 1 1934.86,633.82" stroke="url(#litg)" stroke-width="3.6" fill="none"/>
<path d="M1933.27,632.97L1941.22,637.20" stroke="#b9bdc9" stroke-width="3.2" fill="none"/>
<path d="M2072.05,681.13A39.80,39.80 0 1 1 2127.35,681.13" stroke="#687185" stroke-width="3.6" fill="none"/>
<path d="M2072.05,681.13A39.80,39.80 0 0 1 2099.70,612.70" stroke="url(#litg)" stroke-width="3.6" fill="none"/>
<path d="M2099.70,610.90L2099.70,619.90" stroke="#b9bdc9" stroke-width="3.2" fill="none"/>
<path d="M2202.15,681.13A39.80,39.80 0 1 1 2257.45,681.13" stroke="#687185" stroke-width="3.6" fill="none"/>
<path d="M2200.90,682.42L2207.15,675.95" stroke="#b9bdc9" stroke-width="3.2" fill="none"/>
<circle cx="1756" cy="750.5" r="8.800" fill="none" stroke="#8f79f6" stroke-width="2.200"/><path d="M1756,745.5 v10" stroke="#8f79f6" stroke-width="2.400"/>
<path d="M1910.5,740.0L1899.5,750.5L1910.5,761.0" stroke="#7a8398" stroke-width="2.2" fill="none" stroke-linejoin="miter"/>
<path d="M2195.5,740.0L2206.5,750.5L2195.5,761.0" stroke="#7a8398" stroke-width="2.2" fill="none" stroke-linejoin="miter"/>
<path d="M2252.500,741.5 h11 l11.800,18 h10.700 M2258.200,741.5 l11.800,18" fill="none" stroke="#8f79f6" stroke-width="2.400" stroke-linejoin="round"/>
<g fill="none" stroke="#a3acc2" stroke-width="2"><rect x="1861" y="982.5" width="26.500" height="24.500" rx="2.500"/><path d="M1869.800,982.5 v24.500 M1878.600,982.5 v24.500"/></g><path d="M1869.800,983.5 v13 M1878.600,983.5 v13" stroke="#a3acc2" stroke-width="5.400"/>
<path d="M1788.35,1061.63A39.80,39.80 0 1 1 1843.65,1061.63" stroke="#687185" stroke-width="3.6" fill="none"/>
<path d="M1788.35,1061.63A39.80,39.80 0 0 1 1817.39,993.22" stroke="url(#litg)" stroke-width="3.6" fill="none"/>
<path d="M1817.83,998.15A34.90,34.90 0 0 1 1845.60,1014.51" stroke="#ffcc00" stroke-width="4.400" fill="none"/>
<path d="M1817.45,991.43L1817.14,1000.42" stroke="#b9bdc9" stroke-width="3.2" fill="none"/>
<path d="M1942.35,1061.63A39.80,39.80 0 1 1 1997.65,1061.63" stroke="#687185" stroke-width="3.6" fill="none"/>
<path d="M1942.35,1061.63A39.80,39.80 0 0 1 1933.64,1016.81" stroke="url(#litg)" stroke-width="3.6" fill="none"/>
<path d="M1932.00,1016.08L1940.22,1019.74" stroke="#b9bdc9" stroke-width="3.2" fill="none"/>
<path d="M2072.05,1061.63A39.80,39.80 0 1 1 2127.35,1061.63" stroke="#687185" stroke-width="3.6" fill="none"/>
<path d="M2072.05,1061.63A39.80,39.80 0 0 1 2099.70,993.20" stroke="url(#litg)" stroke-width="3.6" fill="none"/>
<path d="M2099.70,991.40L2099.70,1000.40" stroke="#b9bdc9" stroke-width="3.2" fill="none"/>
<path d="M2202.15,1061.63A39.80,39.80 0 1 1 2257.45,1061.63" stroke="#687185" stroke-width="3.6" fill="none"/>
<path d="M2200.90,1062.92L2207.15,1056.45" stroke="#b9bdc9" stroke-width="3.2" fill="none"/>
<path d="M1749.65,1012.89A10.50,10.50 0 1 1 1760.15,1012.89" fill="none" stroke="#a88600" stroke-width="9.200"/>
<path d="M1754.90,993.30A10.50,10.50 0 0 1 1758.83,994.06" fill="none" stroke="#ffcc00" stroke-width="9.200"/>
<path d="M1758.83,994.06A10.50,10.50 0 0 1 1761.36,995.53" fill="none" stroke="#ffffff" stroke-width="9.200"/>
<circle cx="377" cy="1206.5" r="13" fill="#8f79f6"/>
<path d="M375.40,1201.30L375.40,1211.70L367.80,1206.50Z" fill="#2b2f3c"/>
<path d="M378.60,1201.30L378.60,1211.70L386.20,1206.50Z" fill="#2b2f3c"/>
<path d="M479,1215 l7,-17 l5.500,9 h8 l4,8" fill="none" stroke="#c5cad6" stroke-width="1.800" stroke-linejoin="round"/>
<circle cx="567.0" cy="1206.5" r="13" fill="#8f79f6"/>
<path d="M565.40,1201.30L565.40,1211.70L557.80,1206.50Z" fill="#2b2f3c"/>
<path d="M568.60,1201.30L568.60,1211.70L576.20,1206.50Z" fill="#2b2f3c"/>
<path d="M601.0,1278.0 l10.5,-26 l8.5,14 h17 l9,12" fill="none" stroke="#4d5464" stroke-width="2.200" stroke-linejoin="round" stroke-linecap="round"/>
<circle cx="727.0" cy="1206.5" r="13" fill="#8f79f6"/>
<path d="M725.40,1201.30L725.40,1211.70L717.80,1206.50Z" fill="#2b2f3c"/>
<path d="M728.60,1201.30L728.60,1211.70L736.20,1206.50Z" fill="#2b2f3c"/>
<path d="M761.0,1278.0 l10.5,-26 l8.5,14 h17 l9,12" fill="none" stroke="#4d5464" stroke-width="2.200" stroke-linejoin="round" stroke-linecap="round"/>
<circle cx="887.0" cy="1206.5" r="13" fill="#8f79f6"/>
<path d="M885.40,1201.30L885.40,1211.70L877.80,1206.50Z" fill="#2b2f3c"/>
<path d="M888.60,1201.30L888.60,1211.70L896.20,1206.50Z" fill="#2b2f3c"/>
<path d="M919.3,1262.5 c2,-12 9,-14 12,0 s8,22 12,3 s8,-22 12,-3 s8,18 11.500,3" fill="none" stroke="#4d5464" stroke-width="2.600" stroke-linecap="round"/>
<circle cx="1047.0" cy="1206.5" r="13" fill="#8f79f6"/>
<path d="M1045.40,1201.30L1045.40,1211.70L1037.80,1206.50Z" fill="#2b2f3c"/>
<path d="M1048.60,1201.30L1048.60,1211.70L1056.20,1206.50Z" fill="#2b2f3c"/>
<circle cx="1207.0" cy="1206.5" r="13" fill="#f5c211"/>
<path d="M1205.40,1201.30L1205.40,1211.70L1197.80,1206.50Z" fill="#2b2f3c"/>
<path d="M1208.60,1201.30L1208.60,1211.70L1216.20,1206.50Z" fill="#2b2f3c"/>
<circle cx="1367.0" cy="1206.5" r="13" fill="#8f79f6"/>
<path d="M1365.40,1201.30L1365.40,1211.70L1357.80,1206.50Z" fill="#2b2f3c"/>
<path d="M1368.60,1201.30L1368.60,1211.70L1376.20,1206.50Z" fill="#2b2f3c"/>
<g fill="none" stroke="#525a6a" stroke-width="2.800" stroke-linecap="round"><path d="M1397.3,1256.5 l17,19 M1414.3,1254.5 l18,21 M1432.3,1254.5 l18,20"/><path d="M1414.3,1254.5 c-7,4 -6,14 0,21 M1432.3,1254.5 c-7,4 -6,14 0,21"/></g><circle cx="1414.3" cy="1275.5" r="3.200" fill="#525a6a"/><circle cx="1414.3" cy="1254.5" r="3.200" fill="#525a6a"/><circle cx="1432.3" cy="1275.5" r="3.200" fill="#525a6a"/><circle cx="1432.3" cy="1254.5" r="3.200" fill="#525a6a"/>
<circle cx="1527.0" cy="1206.5" r="13" fill="#8f79f6"/>
<path d="M1525.40,1201.30L1525.40,1211.70L1517.80,1206.50Z" fill="#2b2f3c"/>
<path d="M1528.60,1201.30L1528.60,1211.70L1536.20,1206.50Z" fill="#2b2f3c"/>
<g fill="none" stroke="#525a6a" stroke-width="2.800" stroke-linecap="round"><path d="M1557.3,1256.5 l17,19 M1574.3,1254.5 l18,21 M1592.3,1254.5 l18,20"/><path d="M1574.3,1254.5 c-7,4 -6,14 0,21 M1592.3,1254.5 c-7,4 -6,14 0,21"/></g><circle cx="1574.3" cy="1275.5" r="3.200" fill="#525a6a"/><circle cx="1574.3" cy="1254.5" r="3.200" fill="#525a6a"/><circle cx="1592.3" cy="1275.5" r="3.200" fill="#525a6a"/><circle cx="1592.3" cy="1254.5" r="3.200" fill="#525a6a"/>
<circle cx="1687.0" cy="1206.5" r="13" fill="#8f79f6"/>
<path d="M1685.40,1201.30L1685.40,1211.70L1677.80,1206.50Z" fill="#2b2f3c"/>
<path d="M1688.60,1201.30L1688.60,1211.70L1696.20,1206.50Z" fill="#2b2f3c"/>
<g fill="none" stroke="#525a6a" stroke-width="2.800" stroke-linecap="round"><path d="M1717.3,1256.5 l17,19 M1734.3,1254.5 l18,21 M1752.3,1254.5 l18,20"/><path d="M1734.3,1254.5 c-7,4 -6,14 0,21 M1752.3,1254.5 c-7,4 -6,14 0,21"/></g><circle cx="1734.3" cy="1275.5" r="3.200" fill="#525a6a"/><circle cx="1734.3" cy="1254.5" r="3.200" fill="#525a6a"/><circle cx="1752.3" cy="1275.5" r="3.200" fill="#525a6a"/><circle cx="1752.3" cy="1254.5" r="3.200" fill="#525a6a"/>
<circle cx="1847.0" cy="1206.5" r="13" fill="#8f79f6"/>
<path d="M1845.40,1201.30L1845.40,1211.70L1837.80,1206.50Z" fill="#2b2f3c"/>
<path d="M1848.60,1201.30L1848.60,1211.70L1856.20,1206.50Z" fill="#2b2f3c"/>
<path d="M1877.1,1256.5 V1274.5" stroke="#4e5666" stroke-width="3.800"/>
<path d="M1883.1,1250.0 V1281.0" stroke="#4e5666" stroke-width="3.800"/>
<path d="M1889.2,1255.0 V1276.0" stroke="#4e5666" stroke-width="3.800"/>
<path d="M1895.2,1259.0 V1272.0" stroke="#4e5666" stroke-width="3.800"/>
<path d="M1901.3,1261.5 V1269.5" stroke="#4e5666" stroke-width="3.800"/>
<path d="M1907.3,1255.5 V1275.5" stroke="#4e5666" stroke-width="3.800"/>
<path d="M1913.4,1250.0 V1281.0" stroke="#4e5666" stroke-width="3.800"/>
<path d="M1919.4,1253.5 V1277.5" stroke="#4e5666" stroke-width="3.800"/>
<path d="M1925.5,1258.5 V1272.5" stroke="#4e5666" stroke-width="3.800"/>
<path d="M1931.5,1261.5 V1269.5" stroke="#4e5666" stroke-width="3.800"/>
<circle cx="2043" cy="1206" r="13" fill="#8f79f6"/>
<path d="M2041.40,1200.80L2041.40,1211.20L2033.80,1206.00Z" fill="#2b2f3c"/>
<path d="M2044.60,1200.80L2044.60,1211.20L2052.20,1206.00Z" fill="#2b2f3c"/>
<circle cx="2141" cy="1206" r="13" fill="#8f79f6"/>
<path d="M2139.40,1200.80L2139.40,1211.20L2131.80,1206.00Z" fill="#2b2f3c"/>
<path d="M2142.60,1200.80L2142.60,1211.20L2150.20,1206.00Z" fill="#2b2f3c"/>
<circle cx="2239" cy="1206" r="13" fill="#8f79f6"/>
<path d="M2237.40,1200.80L2237.40,1211.20L2229.80,1206.00Z" fill="#2b2f3c"/>
<path d="M2240.60,1200.80L2240.60,1211.20L2248.20,1206.00Z" fill="#2b2f3c"/>
<circle cx="2043" cy="1266" r="13" fill="#8f79f6"/>
<path d="M2041.40,1260.80L2041.40,1271.20L2033.80,1266.00Z" fill="#2b2f3c"/>
<path d="M2044.60,1260.80L2044.60,1271.20L2052.20,1266.00Z" fill="#2b2f3c"/>
<circle cx="2141" cy="1266" r="13" fill="#8f79f6"/>
<path d="M2139.40,1260.80L2139.40,1271.20L2131.80,1266.00Z" fill="#2b2f3c"/>
<path d="M2142.60,1260.80L2142.60,1271.20L2150.20,1266.00Z" fill="#2b2f3c"/>
<circle cx="2239" cy="1266" r="13" fill="#8f79f6"/>
<path d="M2237.40,1260.80L2237.40,1271.20L2229.80,1266.00Z" fill="#2b2f3c"/>
<path d="M2240.60,1260.80L2240.60,1271.20L2248.20,1266.00Z" fill="#2b2f3c"/>
<path d="M812.0,1347.5L804.0,1354.5L812.0,1361.5" stroke="#7a8398" stroke-width="2" fill="none" stroke-linejoin="miter"/>
<path d="M937.5,1347.5L945.5,1354.5L937.5,1361.5" stroke="#7a8398" stroke-width="2" fill="none" stroke-linejoin="miter"/>
<path d="M434.21,1496.63A54.40,54.40 0 1 1 509.79,1496.63" stroke="#687185" stroke-width="3.6" fill="none"/>
<path d="M434.21,1496.63A54.40,54.40 0 0 1 419.98,1441.59" stroke="url(#litg)" stroke-width="3.6" fill="none"/>
<path d="M418.26,1441.07L431.36,1445.07" stroke="#b9bdc9" stroke-width="3.2" fill="none"/>
<circle cx="473.77" cy="1423.65" r="2.500" fill="#2a2e38"/>
<circle cx="502.21" cy="1442.11" r="2.500" fill="#2a2e38"/>
<circle cx="500.43" cy="1475.96" r="2.500" fill="#2a2e38"/>
<circle cx="470.23" cy="1491.35" r="2.500" fill="#2a2e38"/>
<circle cx="441.79" cy="1472.89" r="2.500" fill="#2a2e38"/>
<circle cx="443.57" cy="1439.04" r="2.500" fill="#2a2e38"/>
<path d="M706.11,1496.63A54.40,54.40 0 1 1 781.69,1496.63" stroke="#687185" stroke-width="3.6" fill="none"/>
<path d="M704.86,1497.93L714.38,1488.07" stroke="#b9bdc9" stroke-width="3.2" fill="none"/>
<circle cx="745.67" cy="1423.65" r="2.500" fill="#2a2e38"/>
<circle cx="774.11" cy="1442.11" r="2.500" fill="#2a2e38"/>
<circle cx="772.33" cy="1475.96" r="2.500" fill="#2a2e38"/>
<circle cx="742.13" cy="1491.35" r="2.500" fill="#2a2e38"/>
<circle cx="713.69" cy="1472.89" r="2.500" fill="#2a2e38"/>
<circle cx="715.47" cy="1439.04" r="2.500" fill="#2a2e38"/>
<path d="M965.51,1496.63A54.40,54.40 0 1 1 1041.09,1496.63" stroke="#687185" stroke-width="3.6" fill="none"/>
<path d="M965.51,1496.63A54.40,54.40 0 1 1 1041.09,1496.63" stroke="url(#litg)" stroke-width="3.6" fill="none"/>
<path d="M1042.34,1497.93L1032.82,1488.07" stroke="#b9bdc9" stroke-width="3.2" fill="none"/>
<circle cx="1005.07" cy="1423.65" r="2.500" fill="#2a2e38"/>
<circle cx="1033.51" cy="1442.11" r="2.500" fill="#2a2e38"/>
<circle cx="1031.73" cy="1475.96" r="2.500" fill="#2a2e38"/>
<circle cx="1001.53" cy="1491.35" r="2.500" fill="#2a2e38"/>
<circle cx="973.09" cy="1472.89" r="2.500" fill="#2a2e38"/>
<circle cx="974.87" cy="1439.04" r="2.500" fill="#2a2e38"/>
<path d="M1228.21,1496.63A54.40,54.40 0 1 1 1303.79,1496.63" stroke="#687185" stroke-width="3.6" fill="none"/>
<path d="M1226.96,1497.93L1236.48,1488.07" stroke="#b9bdc9" stroke-width="3.2" fill="none"/>
<circle cx="1267.77" cy="1423.65" r="2.500" fill="#2a2e38"/>
<circle cx="1296.21" cy="1442.11" r="2.500" fill="#2a2e38"/>
<circle cx="1294.43" cy="1475.96" r="2.500" fill="#2a2e38"/>
<circle cx="1264.23" cy="1491.35" r="2.500" fill="#2a2e38"/>
<circle cx="1235.79" cy="1472.89" r="2.500" fill="#2a2e38"/>
<circle cx="1237.57" cy="1439.04" r="2.500" fill="#2a2e38"/>
<circle cx="612.0" cy="1416.8" r="2.4" fill="#2c303b"/>
<circle cx="621.5" cy="1416.8" r="2.4" fill="#2c303b"/>
<circle cx="612.0" cy="1426.3" r="2.4" fill="#2c303b"/>
<circle cx="621.5" cy="1426.3" r="2.4" fill="#2c303b"/>
<circle cx="612.0" cy="1435.9" r="2.4" fill="#2c303b"/>
<circle cx="621.5" cy="1435.9" r="2.4" fill="#2c303b"/>
<circle cx="612.0" cy="1445.5" r="2.4" fill="#2c303b"/>
<circle cx="621.5" cy="1445.5" r="2.4" fill="#2c303b"/>
<circle cx="612.0" cy="1455.0" r="2.4" fill="#2c303b"/>
<circle cx="621.5" cy="1455.0" r="2.4" fill="#2c303b"/>
<circle cx="612.0" cy="1464.5" r="2.4" fill="#2c303b"/>
<circle cx="621.5" cy="1464.5" r="2.4" fill="#2c303b"/>
<circle cx="612.0" cy="1474.1" r="2.4" fill="#2c303b"/>
<circle cx="621.5" cy="1474.1" r="2.4" fill="#2c303b"/>
<circle cx="612.0" cy="1483.6" r="2.4" fill="#2c303b"/>
<circle cx="621.5" cy="1483.6" r="2.4" fill="#2c303b"/>
<circle cx="612.0" cy="1493.2" r="2.4" fill="#2c303b"/>
<circle cx="621.5" cy="1493.2" r="2.4" fill="#2c303b"/>
<circle cx="612.0" cy="1502.8" r="2.4" fill="#2c303b"/>
<circle cx="621.5" cy="1502.8" r="2.4" fill="#2c303b"/>
<circle cx="870.5" cy="1416.8" r="2.4" fill="#2c303b"/>
<circle cx="880.0" cy="1416.8" r="2.4" fill="#2c303b"/>
<circle cx="870.5" cy="1426.3" r="2.4" fill="#2c303b"/>
<circle cx="880.0" cy="1426.3" r="2.4" fill="#2c303b"/>
<circle cx="870.5" cy="1435.9" r="2.4" fill="#2c303b"/>
<circle cx="880.0" cy="1435.9" r="2.4" fill="#2c303b"/>
<circle cx="870.5" cy="1445.5" r="2.4" fill="#2c303b"/>
<circle cx="880.0" cy="1445.5" r="2.4" fill="#2c303b"/>
<circle cx="870.5" cy="1455.0" r="2.4" fill="#2c303b"/>
<circle cx="880.0" cy="1455.0" r="2.4" fill="#2c303b"/>
<circle cx="870.5" cy="1464.5" r="2.4" fill="#2c303b"/>
<circle cx="880.0" cy="1464.5" r="2.4" fill="#2c303b"/>
<circle cx="870.5" cy="1474.1" r="2.4" fill="#2c303b"/>
<circle cx="880.0" cy="1474.1" r="2.4" fill="#2c303b"/>
<circle cx="870.5" cy="1483.6" r="2.4" fill="#2c303b"/>
<circle cx="880.0" cy="1483.6" r="2.4" fill="#2c303b"/>
<circle cx="870.5" cy="1493.2" r="2.4" fill="#2c303b"/>
<circle cx="880.0" cy="1493.2" r="2.4" fill="#2c303b"/>
<circle cx="870.5" cy="1502.8" r="2.4" fill="#2c303b"/>
<circle cx="880.0" cy="1502.8" r="2.4" fill="#2c303b"/>
<circle cx="1128.6" cy="1416.8" r="2.4" fill="#2c303b"/>
<circle cx="1138.1" cy="1416.8" r="2.4" fill="#2c303b"/>
<circle cx="1128.6" cy="1426.3" r="2.4" fill="#2c303b"/>
<circle cx="1138.1" cy="1426.3" r="2.4" fill="#2c303b"/>
<circle cx="1128.6" cy="1435.9" r="2.4" fill="#2c303b"/>
<circle cx="1138.1" cy="1435.9" r="2.4" fill="#2c303b"/>
<circle cx="1128.6" cy="1445.5" r="2.4" fill="#2c303b"/>
<circle cx="1138.1" cy="1445.5" r="2.4" fill="#2c303b"/>
<circle cx="1128.6" cy="1455.0" r="2.4" fill="#2c303b"/>
<circle cx="1138.1" cy="1455.0" r="2.4" fill="#2c303b"/>
<circle cx="1128.6" cy="1464.5" r="2.4" fill="#2c303b"/>
<circle cx="1138.1" cy="1464.5" r="2.4" fill="#2c303b"/>
<circle cx="1128.6" cy="1474.1" r="2.4" fill="#2c303b"/>
<circle cx="1138.1" cy="1474.1" r="2.4" fill="#2c303b"/>
<circle cx="1128.6" cy="1483.6" r="2.4" fill="#2c303b"/>
<circle cx="1138.1" cy="1483.6" r="2.4" fill="#2c303b"/>
<circle cx="1128.6" cy="1493.2" r="2.4" fill="#2c303b"/>
<circle cx="1138.1" cy="1493.2" r="2.4" fill="#2c303b"/>
<circle cx="1128.6" cy="1502.8" r="2.4" fill="#2c303b"/>
<circle cx="1138.1" cy="1502.8" r="2.4" fill="#2c303b"/>
<path d="M1419.5,1460.5L1426.9,1455.7L1434.4,1450.9L1441.8,1446.1L1449.3,1441.3L1456.7,1436.6L1464.2,1432.0L1471.6,1427.4L1479.1,1423.0L1486.5,1418.6L1494.0,1414.3L1501.4,1410.2L1508.8,1406.2L1516.3,1402.4L1523.7,1398.7L1531.2,1395.2L1538.6,1391.9L1546.1,1388.8L1553.5,1385.8L1561.0,1383.1L1568.4,1380.6L1575.9,1378.3L1583.3,1376.2L1590.8,1374.3L1598.2,1372.7L1605.6,1371.3L1613.1,1370.2L1620.5,1369.3L1628.0,1368.7L1635.4,1368.3L1642.9,1368.2L1650.3,1368.3L1657.8,1368.7L1665.2,1369.3L1672.7,1370.2L1680.1,1371.3L1687.5,1372.7L1695.0,1374.3L1702.4,1376.2L1709.9,1378.3L1717.3,1380.6L1724.8,1383.1L1732.2,1385.8L1739.7,1388.8L1747.1,1391.9L1754.6,1395.2L1762.0,1398.7L1769.5,1402.4L1776.9,1406.2L1784.3,1410.2L1791.8,1414.3L1799.2,1418.6L1806.7,1423.0L1814.1,1427.4L1821.6,1432.0L1829.0,1436.6L1836.5,1441.3L1843.9,1446.1L1851.4,1450.9L1858.8,1455.7L1866.2,1460.5L1873.7,1465.3L1881.1,1470.1L1888.6,1474.9L1896.0,1479.7L1903.5,1484.4L1910.9,1489.0L1918.4,1493.6L1925.8,1498.0L1933.3,1502.4L1940.7,1506.6L1948.2,1510.8L1955.6,1514.8L1963.0,1518.6L1970.5,1522.3L1977.9,1525.8L1985.4,1529.1L1992.8,1532.2L2000.3,1535.2L2007.7,1537.9L2015.2,1540.4L2022.6,1542.7L2030.1,1544.8L2037.5,1546.7L2045.0,1548.3L2052.4,1549.7L2059.8,1550.8L2067.3,1551.7L2074.7,1552.3L2082.2,1552.7L2089.6,1552.8L2097.1,1552.7L2104.5,1552.3L2112.0,1551.7L2119.4,1550.8L2126.9,1549.7L2134.3,1548.3L2141.7,1546.7L2149.2,1544.8L2156.6,1542.7L2164.1,1540.4L2171.5,1537.9L2179.0,1535.2L2186.4,1532.2L2193.9,1529.1L2201.3,1525.8L2208.8,1522.3L2216.2,1518.6L2223.7,1514.8L2231.1,1510.8L2238.5,1506.6L2246.0,1502.4L2253.4,1498.0L2260.9,1493.6L2268.3,1489.0L2275.8,1484.4L2283.2,1479.7L2290.7,1474.9L2298.1,1470.1L2305.6,1465.3L2313.0,1460.5 L2313,1460.5 L1419.5,1460.5 Z" fill="url(#wfL)"/>
<path d="M1419.5,1460.5L1426.9,1455.7L1434.4,1450.9L1441.8,1446.1L1449.3,1441.3L1456.7,1436.6L1464.2,1432.0L1471.6,1427.4L1479.1,1423.0L1486.5,1418.6L1494.0,1414.3L1501.4,1410.2L1508.8,1406.2L1516.3,1402.4L1523.7,1398.7L1531.2,1395.2L1538.6,1391.9L1546.1,1388.8L1553.5,1385.8L1561.0,1383.1L1568.4,1380.6L1575.9,1378.3L1583.3,1376.2L1590.8,1374.3L1598.2,1372.7L1605.6,1371.3L1613.1,1370.2L1620.5,1369.3L1628.0,1368.7L1635.4,1368.3L1642.9,1368.2L1650.3,1368.3L1657.8,1368.7L1665.2,1369.3L1672.7,1370.2L1680.1,1371.3L1687.5,1372.7L1695.0,1374.3L1702.4,1376.2L1709.9,1378.3L1717.3,1380.6L1724.8,1383.1L1732.2,1385.8L1739.7,1388.8L1747.1,1391.9L1754.6,1395.2L1762.0,1398.7L1769.5,1402.4L1776.9,1406.2L1784.3,1410.2L1791.8,1414.3L1799.2,1418.6L1806.7,1423.0L1814.1,1427.4L1821.6,1432.0L1829.0,1436.6L1836.5,1441.3L1843.9,1446.1L1851.4,1450.9L1858.8,1455.7L1866.2,1460.5L1873.7,1465.3L1881.1,1470.1L1888.6,1474.9L1896.0,1479.7L1903.5,1484.4L1910.9,1489.0L1918.4,1493.6L1925.8,1498.0L1933.3,1502.4L1940.7,1506.6L1948.2,1510.8L1955.6,1514.8L1963.0,1518.6L1970.5,1522.3L1977.9,1525.8L1985.4,1529.1L1992.8,1532.2L2000.3,1535.2L2007.7,1537.9L2015.2,1540.4L2022.6,1542.7L2030.1,1544.8L2037.5,1546.7L2045.0,1548.3L2052.4,1549.7L2059.8,1550.8L2067.3,1551.7L2074.7,1552.3L2082.2,1552.7L2089.6,1552.8L2097.1,1552.7L2104.5,1552.3L2112.0,1551.7L2119.4,1550.8L2126.9,1549.7L2134.3,1548.3L2141.7,1546.7L2149.2,1544.8L2156.6,1542.7L2164.1,1540.4L2171.5,1537.9L2179.0,1535.2L2186.4,1532.2L2193.9,1529.1L2201.3,1525.8L2208.8,1522.3L2216.2,1518.6L2223.7,1514.8L2231.1,1510.8L2238.5,1506.6L2246.0,1502.4L2253.4,1498.0L2260.9,1493.6L2268.3,1489.0L2275.8,1484.4L2283.2,1479.7L2290.7,1474.9L2298.1,1470.1L2305.6,1465.3L2313.0,1460.5" fill="none" stroke="#8b73f7" stroke-width="3.400" stroke-linejoin="round"/>
<path d="M1419,1455 a6,6 0 0 1 0,12 z" fill="#e878ee"/>
<path d="M2281,1330.500 l21,21 M2302,1330.500 l-21,21" stroke="#f1f2f6" stroke-width="2.200"/>
</svg>
<div id="top">

</div>
</div>
</body></html>
